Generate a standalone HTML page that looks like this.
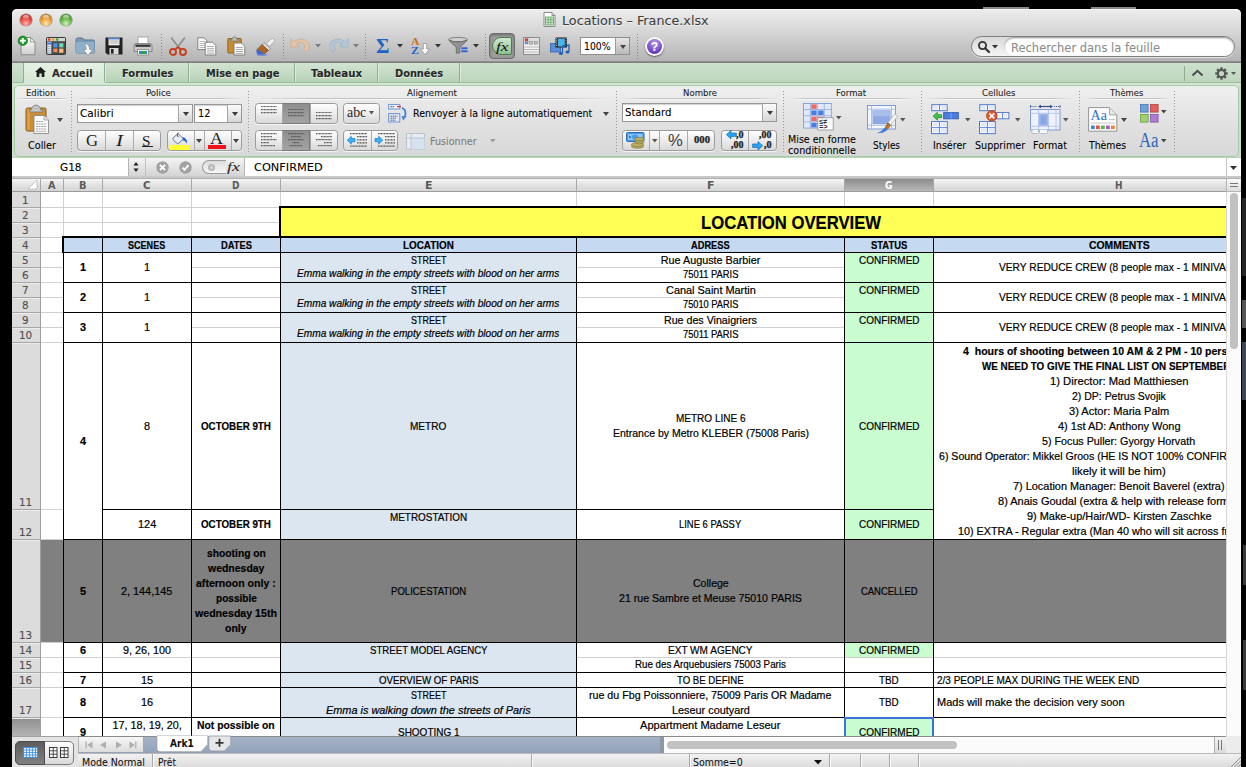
<!DOCTYPE html>
<html lang="fr"><head><meta charset="utf-8"><title>Locations – France.xlsx</title>
<style>
html,body{margin:0;padding:0;background:#000;}
body{width:1246px;height:767px;overflow:hidden;position:relative;font-family:"Liberation Sans",sans-serif;}
#root{position:absolute;left:0;top:0;width:1246px;height:767px;overflow:hidden;background:#000;}
#root div{position:absolute;box-sizing:border-box;}
#root svg{position:absolute;overflow:visible;}
.t{position:absolute;white-space:pre;line-height:16px;transform-origin:0 50%;-webkit-text-stroke:0.2px currentColor;}

</style></head>
<body>
<div id="root">
<div style="left:983px;top:7px;width:46px;height:2px;background:#8a8a8a;"></div>
<div style="left:1091px;top:7px;width:45px;height:2px;background:#8a8a8a;"></div>
<div style="left:12px;top:9px;width:1229px;height:758px;background:#c9dfc9;border-radius:5px 5px 0 0;"></div>
<div style="left:12px;top:9px;width:1229px;height:53px;background:linear-gradient(#ececec,#d6d6d6 42%,#b3b3b3);border-radius:5px 5px 0 0;border-top:1px solid #f6f6f6;"></div>
<div style="left:12px;top:61px;width:1229px;height:1px;background:#8e8e8e;"></div>
<div style="left:12px;top:62px;width:1229px;height:1px;background:#7f7f7f;"></div>
<div style="left:20px;top:14px;width:12px;height:12px;border-radius:50%;background:radial-gradient(circle at 50% 78%,#ffb3ab 0,#e9524a 45%,#b3261f 82%,#7d1510 100%);box-shadow:0 0 0 0.6px rgba(0,0,0,.4),0 1px 0.5px rgba(255,255,255,.7);"></div>
<div style="left:23px;top:15px;width:6px;height:3.5px;border-radius:50%;background:linear-gradient(rgba(255,255,255,.75),rgba(255,255,255,.05));"></div>
<div style="left:40px;top:14px;width:12px;height:12px;border-radius:50%;background:radial-gradient(circle at 50% 78%,#ffe9a8 0,#eda23c 45%,#b8741c 82%,#80500f 100%);box-shadow:0 0 0 0.6px rgba(0,0,0,.4),0 1px 0.5px rgba(255,255,255,.7);"></div>
<div style="left:43px;top:15px;width:6px;height:3.5px;border-radius:50%;background:linear-gradient(rgba(255,255,255,.75),rgba(255,255,255,.05));"></div>
<div style="left:60px;top:14px;width:12px;height:12px;border-radius:50%;background:radial-gradient(circle at 50% 78%,#d3f0bc 0,#69b84a 45%,#3f8a28 82%,#275e16 100%);box-shadow:0 0 0 0.6px rgba(0,0,0,.4),0 1px 0.5px rgba(255,255,255,.7);"></div>
<div style="left:63px;top:15px;width:6px;height:3.5px;border-radius:50%;background:linear-gradient(rgba(255,255,255,.75),rgba(255,255,255,.05));"></div>
<svg style="left:543px;top:12px" width="13" height="15" viewBox="0 0 13 15"><path d="M1 .5H9L12 3.5V14.5H1Z" fill="#fff" stroke="#8a8a8a"/><path d="M9 .5V3.5H12" fill="#ddd" stroke="#8a8a8a"/><rect x="2.5" y="5" width="8" height="8" fill="#d5ead5" stroke="#5aa25a" stroke-width=".8"/><path d="M2.5 7.7H10.5M2.5 10.3H10.5M5.2 5V13M7.8 5V13" stroke="#5aa25a" stroke-width=".7"/></svg>
<span class="t" style="left:561.90px;top:13px;font-size:12.6px;font-family:'DejaVu Sans',sans-serif;color:#3c3c3c;transform:scaleX(1.0111);-webkit-text-stroke:0.08px currentColor;text-shadow:0 1px 0 rgba(255,255,255,.6);">Locations – France.xlsx</span>
<svg style="left:18px;top:36px" width="18" height="20" viewBox="0 0 18 20"><defs><linearGradient id="gd" x1="0" y1="0" x2="0" y2="1"><stop offset="0" stop-color="#ffffff"/><stop offset="1" stop-color="#cfcfcf"/></linearGradient></defs><path d="M3 1.500H12.500L17 6V18.800H3Z" fill="url(#gd)" stroke="#8a8a8a"/><path d="M12.500 1.500V6H17Z" fill="#eee" stroke="#8a8a8a" stroke-width=".8"/><circle cx="4.800" cy="4.800" r="4.700" fill="#1f9a2c" stroke="#156e1e" stroke-width=".7"/><path d="M4.800 1.900V7.700M1.900 4.800H7.700" stroke="#fff" stroke-width="1.900"/></svg>
<svg style="left:46px;top:37px" width="20" height="18" viewBox="0 0 20 18"><rect x=".5" y=".5" width="19" height="17" rx="1" fill="#4a4a4a" stroke="#3a3a3a"/><rect x="1" y="1" width="18" height="3.200" fill="#d4d4d4"/><circle cx="3.200" cy="2.600" r="1.300" fill="#e0342a"/><circle cx="7.200" cy="2.600" r="1.300" fill="#f09a1c"/><circle cx="11.200" cy="2.600" r="1.300" fill="#2fae2a"/><rect x="1.300" y="4.800" width="4" height="12" fill="#dfe6f2"/><rect x="1.300" y="5.500" width="4" height="2" fill="#3a78d8"/><path d="M2 9.500H4.600M2 11.500H4.600M2 13.500H4.600M2 15.500H4.600" stroke="#9ab" stroke-width=".8"/><rect x="7.300" y="6.200" width="4.200" height="4.200" fill="#4a95ea"/><rect x="13.200" y="6.200" width="4.200" height="4.200" fill="#6adcb8"/><rect x="7.300" y="11.600" width="4.200" height="3.600" fill="#f48a5a"/><rect x="13.200" y="11.600" width="4.200" height="4.200" fill="#f6c07a"/></svg>
<svg style="left:75px;top:37px" width="21" height="19" viewBox="0 0 21 19"><path d="M1 2.500Q1 1 2.500 1H7.500L9.500 3H18Q19.500 3 19.500 4.500V14.500Q19.500 16 18 16H2.500Q1 16 1 14.500Z" fill="#7b9ab6" stroke="#56748e"/><path d="M1 5H19.500V14.500Q19.500 16 18 16H2.500Q1 16 1 14.500Z" fill="#8fb0cb"/><path d="M9.200 6.500Q14.500 6.800 14.600 12.500H17.600L13 18.500L8.400 12.500H11.400Q11.400 9 9.200 6.500Z" fill="#fff" stroke="#8a8a8a" stroke-width=".7"/></svg>
<svg style="left:105px;top:37px" width="18" height="18" viewBox="0 0 18 18"><path d="M.5 .5H17.5V17.5H2.5L.5 15.5Z" fill="#222"/><rect x="3.5" y=".8" width="11" height="7.5" fill="#f2f2f2"/><rect x="3.5" y=".8" width="11" height="1.6" fill="#4a7fd0"/><path d="M4.5 4H13.5M4.5 6H13.5" stroke="#999" stroke-width=".8"/><rect x="4.5" y="11" width="9" height="6.5" fill="#d8d8d8"/><rect x="6" y="12" width="2.6" height="4.6" fill="#222"/></svg>
<svg style="left:133px;top:36px" width="20" height="20" viewBox="0 0 20 20"><rect x="5" y="1" width="10" height="7" fill="#fff" stroke="#999" stroke-width=".8"/><path d="M1 9.5Q1 7.5 3 7.5H17Q19 7.5 19 9.5V15.5H1Z" fill="#c9c9c9" stroke="#777" stroke-width=".8"/><rect x="2.5" y="8.6" width="15" height="2.2" fill="#333"/><rect x="4.5" y="13.5" width="11" height="5.5" fill="#f4f4f4" stroke="#888" stroke-width=".8"/><rect x="6" y="15" width="8" height="3" fill="#2b8ad0"/><rect x="9" y="15" width="3" height="3" fill="#2fa25a"/></svg>
<svg style="left:169px;top:36.5px" width="18" height="19" viewBox="0 0 18 19"><path d="M2.5 1L10.5 11.5M15.5 1L7.5 11.5" stroke="#8d8d8d" stroke-width="1.6" stroke-linecap="round"/><circle cx="4" cy="15" r="3" fill="none" stroke="#c5401f" stroke-width="1.9"/><circle cx="14" cy="15" r="3" fill="none" stroke="#c5401f" stroke-width="1.9"/><path d="M6 12.6L9 10M12 12.6L9 10" stroke="#c5401f" stroke-width="1.8"/></svg>
<svg style="left:196.5px;top:36.5px" width="20" height="19" viewBox="0 0 20 19"><path d="M.8 .8H7L9.8 3.6V12.6H.8Z" fill="#fbfbfb" stroke="#777" stroke-width=".9"/><path d="M2.5 4.5H8M2.5 6.5H8M2.5 8.5H8M2.5 10.5H8" stroke="#aaa" stroke-width=".8"/><path d="M8.2 5.2H15.5L18.8 8.5V18H8.2Z" fill="#fbfbfb" stroke="#777" stroke-width=".9"/><path d="M10 9.500H17M10 11.700H17M10 13.900H17M10 16.100H17" stroke="#8a8a8a" stroke-width=".7"/></svg>
<svg style="left:227px;top:36px" width="19" height="20" viewBox="0 0 19 20"><rect x=".8" y="2.5" width="13.5" height="14.5" rx="1" fill="#c98a2d" stroke="#8f5d14" stroke-width=".9"/><path d="M5 3.5Q5 1 7.5 .8Q10 1 10 3.5H11.5V5H3.5V3.5Z" fill="#b9b9b9" stroke="#777" stroke-width=".7"/><path d="M7 7H14.5L17.8 10.3V19H7Z" fill="#fbfbfb" stroke="#777" stroke-width=".9"/><path d="M8.8 11.5H16M8.8 13.5H16M8.8 15.5H16M8.8 17.3H16" stroke="#999" stroke-width=".8"/></svg>
<svg style="left:255px;top:36.5px" width="21" height="19" viewBox="0 0 21 19"><path d="M11.5 6.5L16 2Q17.5 .5 19 2Q20.2 3.5 18.7 5L14.2 9.5Z" fill="#f1f1f1" stroke="#999" stroke-width=".7"/><path d="M9 5.5L15.5 11.5L13.5 13.5L7 7.5Z" fill="#dcdcdc" stroke="#888" stroke-width=".7"/><path d="M7 7.5L13.5 13.5L9 17L2 12.5Z" fill="#a8682a" stroke="#7a4613" stroke-width=".6"/><path d="M1.5 12.5Q6 13.5 9 17Q5.5 18.5 3 17.5Q1 16.5 1.5 12.5Z" fill="#3f66d8"/><ellipse cx="7" cy="17.8" rx="5.5" ry="1.1" fill="#5a78dc" opacity=".7"/></svg>
<svg style="left:290px;top:38px" width="21" height="15" viewBox="0 0 21 15"><path d="M.5 1L1 9.5L9.5 8.5L6.5 6.2Q10 3.5 13.5 5.2Q16.5 7.5 13.8 11.3L16.2 13.8Q21.5 8.5 17.5 3.5Q12 -1.5 3.8 3.6Z" fill="#e3c3a5" stroke="#c9a888" stroke-width=".6"/></svg>
<svg style="left:314.5px;top:44.25px" width="6" height="3.5" viewBox="0 0 6 3.5"><path d="M0 0H6L3.0 3.5Z" fill="#7d7d7d"/></svg>
<svg style="left:328px;top:38px" width="21" height="15" viewBox="0 0 21 15"><path d="M20.5 1L20 9.5L11.5 8.5L14.5 6.2Q11 3.5 7.5 5.2Q4.5 7.5 7.2 11.3L4.8 13.8Q-.5 8.5 3.5 3.5Q9 -1.5 17.2 3.6Z" fill="#b4c7d8" stroke="#97adc2" stroke-width=".6"/></svg>
<svg style="left:352.5px;top:44.25px" width="6" height="3.5" viewBox="0 0 6 3.5"><path d="M0 0H6L3.0 3.5Z" fill="#7d7d7d"/></svg>
<span class="t" style="left:375.50px;top:38px;font-size:20px;font-family:'Liberation Serif',serif;font-weight:bold;color:#1f63c4;transform:scaleX(1.0323);-webkit-text-stroke:0;">Σ</span>
<svg style="left:396.5px;top:44.25px" width="6" height="3.5" viewBox="0 0 6 3.5"><path d="M0 0H6L3.0 3.5Z" fill="#333"/></svg>
<span class="t" style="left:410.50px;top:34px;font-size:10.5px;font-family:'Liberation Serif',serif;font-weight:bold;color:#c8701c;transform:scaleX(1.1193);-webkit-text-stroke:0;">A</span>
<span class="t" style="left:410.50px;top:43px;font-size:10.5px;font-family:'Liberation Serif',serif;font-weight:bold;color:#2a62c8;transform:scaleX(1.1403);-webkit-text-stroke:0;">Z</span>
<svg style="left:420px;top:42.5px" width="10" height="12" viewBox="0 0 10 12"><path d="M3.3 .5H6.7V6H9.5L5 11.5L.5 6H3.3Z" fill="#fff" stroke="#8a8a8a" stroke-width=".7"/></svg>
<svg style="left:434.5px;top:44.25px" width="6" height="3.5" viewBox="0 0 6 3.5"><path d="M0 0H6L3.0 3.5Z" fill="#333"/></svg>
<svg style="left:448px;top:37px" width="21" height="17" viewBox="0 0 21 17"><ellipse cx="10" cy="2.6" rx="9.3" ry="2.2" fill="#d0d0d0" stroke="#6c6c6c" stroke-width=".8"/><path d="M.8 3.2L8.3 10.5V16H11.7V10.5L19.2 3.2Q10 6.6 .8 3.2Z" fill="#939393" stroke="#5e5e5e" stroke-width=".8"/><rect x="13.3" y="10.3" width="6.2" height="1.9" fill="#2a62d8"/><rect x="13.3" y="13.3" width="6.2" height="1.9" fill="#2a62d8"/></svg>
<svg style="left:472.5px;top:44.25px" width="6" height="3.5" viewBox="0 0 6 3.5"><path d="M0 0H6L3.0 3.5Z" fill="#333"/></svg>
<div style="left:489px;top:33px;width:26px;height:26px;border-radius:4px;background:#9d9d9d;border:1px solid #6f6f6f;box-shadow:inset 0 1px 3px rgba(0,0,0,.35);"></div>
<div style="left:492px;top:37px;width:20px;height:18px;border-radius:9px 2px 2px 9px;background:linear-gradient(#cfe8cf,#8fc08f);border:1px solid #4f7a4f;"></div>
<span class="t" style="left:496.20px;top:39px;font-size:13.5px;font-family:'Liberation Serif',serif;font-style:italic;color:#111;transform:scaleX(1.2821);-webkit-text-stroke:0;">fx</span>
<svg style="left:523px;top:37px" width="17" height="18" viewBox="0 0 17 18"><rect x=".6" y=".6" width="15.8" height="16.8" fill="#f4f4f4" stroke="#7e7e7e" stroke-width=".9"/><rect x="1.2" y="1.2" width="14.6" height="6.2" fill="#dedede"/><rect x="1.8" y="1.4" width="3.4" height="3" fill="#d8402a"/><rect x="1.8" y="4.6" width="3.4" height="2.6" fill="#6a8fd0"/><rect x="6.6" y="4.4" width="3.2" height="2.8" fill="#bdbdbd" stroke="#888" stroke-width=".5"/><rect x="11.4" y="4.4" width="3.2" height="2.8" fill="#bdbdbd" stroke="#888" stroke-width=".5"/><path d="M1.2 10H15.8M1.2 12.5H15.8M1.2 15H15.8" stroke="#b5b5b5" stroke-width="1"/></svg>
<svg style="left:550px;top:36.5px" width="21" height="19" viewBox="0 0 21 19"><rect x=".6" y="6.500" width="10" height="8.500" fill="#5a8fd8" stroke="#2f5fa8" stroke-width=".8"/><rect x="5.500" y=".5" width="11.500" height="10" fill="#1c1c1c"/><rect x="7.800" y="1.500" width="7" height="8" fill="#4ab4e8"/><path d="M6.600 1.200V10M16 1.200V10" stroke="#fff" stroke-width=".9" stroke-dasharray="1 1.200"/><path d="M12.500 9V16.200M12.500 9L19 8V14.800" stroke="#1f5fb0" stroke-width="1.300" fill="none"/><ellipse cx="10.900" cy="16.400" rx="2" ry="1.500" fill="#1f5fb0"/><ellipse cx="17.400" cy="15" rx="2" ry="1.500" fill="#1f5fb0"/></svg>
<div style="left:644.5px;top:36.5px;width:19px;height:19px;border-radius:50%;background:#fbfbfb;box-shadow:0 1px 1.5px rgba(0,0,0,.5);"></div>
<div style="left:646.5px;top:38.5px;width:15px;height:15px;border-radius:50%;background:radial-gradient(circle at 50% 25%,#b59be6,#6c3fc2 70%,#5a30ad);"></div>
<span class="t" style="left:650.60px;top:39px;font-size:12.5px;font-weight:bold;color:#fff;transform:scaleX(0.9162);">?</span>
<div style="left:580px;top:37px;width:50px;height:18px;background:#fff;border:1px solid #8f8f8f;"></div>
<div style="left:615px;top:38px;width:14px;height:16px;background:linear-gradient(#e6e6e6,#b9b9b9);border-left:1px solid #9c9c9c;"></div>
<svg style="left:619.5px;top:44.5px" width="6" height="4" viewBox="0 0 6 4"><path d="M0 0H6L3.0 4Z" fill="#444"/></svg>
<span class="t" style="left:583.50px;top:38px;font-size:10.6px;font-family:'DejaVu Sans',sans-serif;transform:scaleX(0.8747);-webkit-text-stroke:0.08px currentColor;">100%</span>
<div style="left:161px;top:34px;width:1px;height:26px;background:repeating-linear-gradient(#8a8a8a 0 1px,transparent 1px 3px);"></div>
<div style="left:283px;top:34px;width:1px;height:26px;background:repeating-linear-gradient(#8a8a8a 0 1px,transparent 1px 3px);"></div>
<div style="left:365px;top:34px;width:1px;height:26px;background:repeating-linear-gradient(#8a8a8a 0 1px,transparent 1px 3px);"></div>
<div style="left:485px;top:34px;width:1px;height:26px;background:repeating-linear-gradient(#8a8a8a 0 1px,transparent 1px 3px);"></div>
<div style="left:637px;top:34px;width:1px;height:26px;background:repeating-linear-gradient(#8a8a8a 0 1px,transparent 1px 3px);"></div>
<div style="left:971px;top:36px;width:264px;height:21px;border-radius:10.5px;background:linear-gradient(#d9d9d9,#f4f4f4);border:1px solid #7e7e7e;box-shadow:0 1px 0 rgba(255,255,255,.6);"></div>
<div style="left:1004px;top:37px;width:230px;height:19px;border-radius:9.5px;background:#fff;box-shadow:inset 0 1px 2px rgba(0,0,0,.45);"></div>
<svg style="left:977px;top:40px" width="14" height="14" viewBox="0 0 14 14"><circle cx="5.5" cy="5.5" r="3.6" fill="none" stroke="#333" stroke-width="1.8"/><path d="M8.2 8.2L12 12" stroke="#333" stroke-width="2.2" stroke-linecap="round"/></svg>
<svg style="left:991.5px;top:45.25px" width="6" height="3.5" viewBox="0 0 6 3.5"><path d="M0 0H6L3.0 3.5Z" fill="#333"/></svg>
<span class="t" style="left:1011.00px;top:40px;font-size:12px;font-family:'DejaVu Sans',sans-serif;color:#8c8c8c;transform:scaleX(0.9581);-webkit-text-stroke:0.08px currentColor;">Rechercher dans la feuille</span>
<div style="left:12px;top:63px;width:1229px;height:20px;background:linear-gradient(#cde0cd,#bcd5bc);"></div>
<div style="left:12px;top:82px;width:1229px;height:1px;background:#9cbd9c;"></div>
<div style="left:12px;top:83px;width:1229px;height:3px;background:#d3e6d3;"></div>
<div style="left:24px;top:63px;width:81px;height:21px;background:linear-gradient(#e6f1e6,#d3e6d3);"></div>
<div style="left:104px;top:63px;width:1px;height:19px;background:#8fb08f;"></div>
<div style="left:105px;top:63px;width:1px;height:19px;background:#dcebdc;"></div>
<span class="t" style="left:52.00px;top:66px;font-size:11.2px;font-family:'DejaVu Sans',sans-serif;font-weight:bold;color:#262626;transform:scaleX(0.8991);-webkit-text-stroke:0.08px currentColor;text-shadow:0 1px 0 rgba(255,255,255,.55);">Accueil</span>
<div style="left:106px;top:63px;width:83px;height:19px;background:linear-gradient(#d2e3d2,#b7d2b7);"></div>
<div style="left:188px;top:63px;width:1px;height:19px;background:#8fb08f;"></div>
<div style="left:189px;top:63px;width:1px;height:19px;background:#dcebdc;"></div>
<span class="t" style="left:121.50px;top:66px;font-size:11.2px;font-family:'DejaVu Sans',sans-serif;font-weight:bold;color:#262626;transform:scaleX(0.8828);-webkit-text-stroke:0.08px currentColor;text-shadow:0 1px 0 rgba(255,255,255,.55);">Formules</span>
<div style="left:190px;top:63px;width:105px;height:19px;background:linear-gradient(#d2e3d2,#b7d2b7);"></div>
<div style="left:294px;top:63px;width:1px;height:19px;background:#8fb08f;"></div>
<div style="left:295px;top:63px;width:1px;height:19px;background:#dcebdc;"></div>
<span class="t" style="left:205.50px;top:66px;font-size:11.2px;font-family:'DejaVu Sans',sans-serif;font-weight:bold;color:#262626;transform:scaleX(0.8779);-webkit-text-stroke:0.08px currentColor;text-shadow:0 1px 0 rgba(255,255,255,.55);">Mise en page</span>
<div style="left:296px;top:63px;width:82px;height:19px;background:linear-gradient(#d2e3d2,#b7d2b7);"></div>
<div style="left:377px;top:63px;width:1px;height:19px;background:#8fb08f;"></div>
<div style="left:378px;top:63px;width:1px;height:19px;background:#dcebdc;"></div>
<span class="t" style="left:311.00px;top:66px;font-size:11.2px;font-family:'DejaVu Sans',sans-serif;font-weight:bold;color:#262626;transform:scaleX(0.9122);-webkit-text-stroke:0.08px currentColor;text-shadow:0 1px 0 rgba(255,255,255,.55);">Tableaux</span>
<div style="left:379px;top:63px;width:81px;height:19px;background:linear-gradient(#d2e3d2,#b7d2b7);"></div>
<div style="left:459px;top:63px;width:1px;height:19px;background:#8fb08f;"></div>
<div style="left:460px;top:63px;width:1px;height:19px;background:#dcebdc;"></div>
<span class="t" style="left:395.00px;top:66px;font-size:11.2px;font-family:'DejaVu Sans',sans-serif;font-weight:bold;color:#262626;transform:scaleX(0.8767);-webkit-text-stroke:0.08px currentColor;text-shadow:0 1px 0 rgba(255,255,255,.55);">Données</span>
<div style="left:23px;top:63px;width:1px;height:19px;background:#8fb08f;"></div>
<svg style="left:35px;top:66.5px" width="11" height="10" viewBox="0 0 11 10"><path d="M5.5 0L0 5H1.6V10H4.3V6.5H6.7V10H9.4V5H11Z" fill="#1e1e1e"/></svg>
<div style="left:1184px;top:66px;width:1px;height:15px;background:#8fae8f;"></div>
<svg style="left:1191px;top:69px" width="13" height="8" viewBox="0 0 13 8"><path d="M1.5 6.5L6.5 1.8L11.5 6.5" fill="none" stroke="#4c4c4c" stroke-width="2"/></svg>
<svg style="left:1214.5px;top:66.5px" width="13" height="13" viewBox="0 0 13 13"><g transform="translate(6.5 6.5)"><rect x="-1.2" y="-6.2" width="2.4" height="3.2" fill="#555" transform="rotate(0)"/><rect x="-1.2" y="-6.2" width="2.4" height="3.2" fill="#555" transform="rotate(45)"/><rect x="-1.2" y="-6.2" width="2.4" height="3.2" fill="#555" transform="rotate(90)"/><rect x="-1.2" y="-6.2" width="2.4" height="3.2" fill="#555" transform="rotate(135)"/><rect x="-1.2" y="-6.2" width="2.4" height="3.2" fill="#555" transform="rotate(180)"/><rect x="-1.2" y="-6.2" width="2.4" height="3.2" fill="#555" transform="rotate(225)"/><rect x="-1.2" y="-6.2" width="2.4" height="3.2" fill="#555" transform="rotate(270)"/><rect x="-1.2" y="-6.2" width="2.4" height="3.2" fill="#555" transform="rotate(315)"/><circle r="3.6" fill="none" stroke="#555" stroke-width="2"/></g></svg>
<svg style="left:1230.5px;top:71.5px" width="5" height="3" viewBox="0 0 5 3"><path d="M0 0H5L2.5 3Z" fill="#555"/></svg>
<div style="left:14px;top:85px;width:1225px;height:72px;background:linear-gradient(#efefef,#e2e2e2 50%,#d8d8d8);border:1px solid #a5cca5;border-radius:5px;"></div>
<div style="left:12px;top:157px;width:1229px;height:1px;background:#b9d4b9;"></div>
<span class="t" style="left:26.40px;top:85px;font-size:8.8px;font-family:'DejaVu Sans',sans-serif;color:#1a1a1a;transform:scaleX(0.9659);-webkit-text-stroke:0.08px currentColor;">Edition</span>
<div style="left:17px;top:98px;width:51px;height:1px;background:linear-gradient(90deg,rgba(190,190,190,0),#c2c2c2 15%,#c2c2c2 85%,rgba(190,190,190,0));"></div>
<div style="left:17px;top:99px;width:51px;height:1px;background:linear-gradient(90deg,rgba(255,255,255,0),#f8f8f8 15%,#f8f8f8 85%,rgba(255,255,255,0));"></div>
<span class="t" style="left:146.20px;top:85px;font-size:8.8px;font-family:'DejaVu Sans',sans-serif;color:#1a1a1a;transform:scaleX(0.9759);-webkit-text-stroke:0.08px currentColor;">Police</span>
<div style="left:76px;top:98px;width:167px;height:1px;background:linear-gradient(90deg,rgba(190,190,190,0),#c2c2c2 15%,#c2c2c2 85%,rgba(190,190,190,0));"></div>
<div style="left:76px;top:99px;width:167px;height:1px;background:linear-gradient(90deg,rgba(255,255,255,0),#f8f8f8 15%,#f8f8f8 85%,rgba(255,255,255,0));"></div>
<span class="t" style="left:407.00px;top:85px;font-size:8.8px;font-family:'DejaVu Sans',sans-serif;color:#1a1a1a;transform:scaleX(0.9904);-webkit-text-stroke:0.08px currentColor;">Alignement</span>
<div style="left:253px;top:98px;width:358px;height:1px;background:linear-gradient(90deg,rgba(190,190,190,0),#c2c2c2 15%,#c2c2c2 85%,rgba(190,190,190,0));"></div>
<div style="left:253px;top:99px;width:358px;height:1px;background:linear-gradient(90deg,rgba(255,255,255,0),#f8f8f8 15%,#f8f8f8 85%,rgba(255,255,255,0));"></div>
<span class="t" style="left:682.70px;top:85px;font-size:8.8px;font-family:'DejaVu Sans',sans-serif;color:#1a1a1a;transform:scaleX(0.9727);-webkit-text-stroke:0.08px currentColor;">Nombre</span>
<div style="left:621px;top:98px;width:157px;height:1px;background:linear-gradient(90deg,rgba(190,190,190,0),#c2c2c2 15%,#c2c2c2 85%,rgba(190,190,190,0));"></div>
<div style="left:621px;top:99px;width:157px;height:1px;background:linear-gradient(90deg,rgba(255,255,255,0),#f8f8f8 15%,#f8f8f8 85%,rgba(255,255,255,0));"></div>
<span class="t" style="left:836.00px;top:85px;font-size:8.8px;font-family:'DejaVu Sans',sans-serif;color:#1a1a1a;transform:scaleX(0.9677);-webkit-text-stroke:0.08px currentColor;">Format</span>
<div style="left:788px;top:98px;width:128px;height:1px;background:linear-gradient(90deg,rgba(190,190,190,0),#c2c2c2 15%,#c2c2c2 85%,rgba(190,190,190,0));"></div>
<div style="left:788px;top:99px;width:128px;height:1px;background:linear-gradient(90deg,rgba(255,255,255,0),#f8f8f8 15%,#f8f8f8 85%,rgba(255,255,255,0));"></div>
<span class="t" style="left:982.00px;top:85px;font-size:8.8px;font-family:'DejaVu Sans',sans-serif;color:#1a1a1a;transform:scaleX(0.9748);-webkit-text-stroke:0.08px currentColor;">Cellules</span>
<div style="left:926px;top:98px;width:148px;height:1px;background:linear-gradient(90deg,rgba(190,190,190,0),#c2c2c2 15%,#c2c2c2 85%,rgba(190,190,190,0));"></div>
<div style="left:926px;top:99px;width:148px;height:1px;background:linear-gradient(90deg,rgba(255,255,255,0),#f8f8f8 15%,#f8f8f8 85%,rgba(255,255,255,0));"></div>
<span class="t" style="left:1110.20px;top:85px;font-size:8.8px;font-family:'DejaVu Sans',sans-serif;color:#1a1a1a;transform:scaleX(0.9531);-webkit-text-stroke:0.08px currentColor;">Thèmes</span>
<div style="left:1084px;top:98px;width:86px;height:1px;background:linear-gradient(90deg,rgba(190,190,190,0),#c2c2c2 15%,#c2c2c2 85%,rgba(190,190,190,0));"></div>
<div style="left:1084px;top:99px;width:86px;height:1px;background:linear-gradient(90deg,rgba(255,255,255,0),#f8f8f8 15%,#f8f8f8 85%,rgba(255,255,255,0));"></div>
<div style="left:71px;top:91px;width:1px;height:62px;background:repeating-linear-gradient(#9a9a9a 0 1px,transparent 1px 3px);"></div>
<div style="left:248px;top:91px;width:1px;height:62px;background:repeating-linear-gradient(#9a9a9a 0 1px,transparent 1px 3px);"></div>
<div style="left:616px;top:91px;width:1px;height:62px;background:repeating-linear-gradient(#9a9a9a 0 1px,transparent 1px 3px);"></div>
<div style="left:783px;top:91px;width:1px;height:62px;background:repeating-linear-gradient(#9a9a9a 0 1px,transparent 1px 3px);"></div>
<div style="left:921px;top:91px;width:1px;height:62px;background:repeating-linear-gradient(#9a9a9a 0 1px,transparent 1px 3px);"></div>
<div style="left:1079px;top:91px;width:1px;height:62px;background:repeating-linear-gradient(#9a9a9a 0 1px,transparent 1px 3px);"></div>
<div style="left:1174px;top:91px;width:1px;height:62px;background:repeating-linear-gradient(#9a9a9a 0 1px,transparent 1px 3px);"></div>
<svg style="left:25px;top:104px" width="24" height="30" viewBox="0 0 24 30"><rect x="1" y="4" width="20" height="23" rx="1.5" fill="#c98d33" stroke="#8d5c17"/><rect x="2" y="5" width="3" height="21" fill="#dba552" opacity=".7"/><path d="M6.5 6Q6.5 1.5 11 1Q15.500 1.5 15.500 6H17.500V8H4.500V6Z" fill="#c4c4c4" stroke="#7c7c7c" stroke-width=".8"/><circle cx="11" cy="3.6" r="1.1" fill="#f4f4f4" stroke="#888" stroke-width=".5"/><path d="M9 11.500H19L23.500 16V29.500H9Z" fill="#fcfcfc" stroke="#8a8a8a" stroke-width=".9"/><path d="M19 11.500V16H23.500" fill="#e4e4e4" stroke="#8a8a8a" stroke-width=".7"/><path d="M11 17.500H18M11 20H21.500M11 22.500H21.500M11 25H21.500M11 27.300H21.500" stroke="#9a9a9a" stroke-width=".9" stroke-dasharray="2 .6"/></svg>
<svg style="left:56.5px;top:118.0px" width="6" height="4" viewBox="0 0 6 4"><path d="M0 0H6L3.0 4Z" fill="#4a4a4a"/></svg>
<span class="t" style="left:27.70px;top:137px;font-size:10.4px;font-family:'DejaVu Sans',sans-serif;transform:scaleX(0.9314);-webkit-text-stroke:0.08px currentColor;">Coller</span>
<div style="left:77px;top:103.5px;width:116px;height:19.0px;background:#fff;border:1px solid #979797;box-shadow:inset 0 1px 1px rgba(0,0,0,.18);"></div>
<div style="left:178px;top:104.5px;width:14px;height:17.0px;background:linear-gradient(#fbfbfb,#d6d6d6);border-left:1px solid #a5a5a5;"></div>
<svg style="left:182.5px;top:111.5px" width="6" height="4" viewBox="0 0 6 4"><path d="M0 0H6L3.0 4Z" fill="#3a3a3a"/></svg>
<span class="t" style="left:80.20px;top:105px;font-size:10.6px;font-family:'DejaVu Sans',sans-serif;transform:scaleX(0.9937);-webkit-text-stroke:0.08px currentColor;">Calibri</span>
<div style="left:194px;top:103.5px;width:48px;height:19.0px;background:#fff;border:1px solid #979797;box-shadow:inset 0 1px 1px rgba(0,0,0,.18);"></div>
<div style="left:227px;top:104.5px;width:14px;height:17.0px;background:linear-gradient(#fbfbfb,#d6d6d6);border-left:1px solid #a5a5a5;"></div>
<svg style="left:231.5px;top:111.5px" width="6" height="4" viewBox="0 0 6 4"><path d="M0 0H6L3.0 4Z" fill="#3a3a3a"/></svg>
<span class="t" style="left:197.80px;top:105px;font-size:10.6px;font-family:'DejaVu Sans',sans-serif;transform:scaleX(0.9196);-webkit-text-stroke:0.08px currentColor;">12</span>
<div style="left:77px;top:130px;width:83.5px;height:20.5px;background:linear-gradient(#fefefe,#ececec 50%,#d9d9d9);border:1px solid #9b9b9b;border-radius:3.5px;box-shadow:0 1px 0 rgba(255,255,255,.7);"></div>
<div style="left:105px;top:131px;width:1px;height:18.5px;background:#a9a9a9;"></div>
<div style="left:132.5px;top:131px;width:1px;height:18.5px;background:#a9a9a9;"></div>
<span class="t" style="left:85.80px;top:133px;font-size:17px;font-family:'Liberation Serif',serif;color:#222;transform:scaleX(0.9771);-webkit-text-stroke:0;">G</span>
<span class="t" style="left:115.50px;top:133px;font-size:17px;font-family:'Liberation Serif',serif;font-style:italic;color:#222;transform:scaleX(1.2342);-webkit-text-stroke:0;">I</span>
<span class="t" style="left:142.00px;top:133px;font-size:15px;font-family:'Liberation Serif',serif;color:#222;transform:scaleX(1.0187);-webkit-text-stroke:0;">S</span>
<div style="left:141.5px;top:146.3px;width:11px;height:1px;background:#222;"></div>
<div style="left:166.5px;top:130px;width:75.0px;height:20.5px;background:linear-gradient(#fefefe,#ececec 50%,#d9d9d9);border:1px solid #9b9b9b;border-radius:3.5px;box-shadow:0 1px 0 rgba(255,255,255,.7);"></div>
<div style="left:193.5px;top:131px;width:1px;height:18.5px;background:#a9a9a9;"></div>
<div style="left:203.5px;top:131px;width:1px;height:18.5px;background:#a9a9a9;"></div>
<div style="left:231.3px;top:131px;width:1px;height:18.5px;background:#a9a9a9;"></div>
<svg style="left:171.5px;top:131.5px" width="17" height="13" viewBox="0 0 17 13"><path d="M6 1.500L11.500 7L6.800 11.200Q5.500 12.200 4.300 11L1.300 7.800Q.4 6.600 1.400 5.600Z" fill="#e9eef5" stroke="#5a6a80" stroke-width=".9"/><path d="M6.500 .6Q4 2.500 6.300 5.200" fill="none" stroke="#444" stroke-width=".9"/><path d="M10.500 5Q15.500 6 15 11.500Q13 8.500 10.800 8.200Z" fill="#2a66d8"/></svg>
<div style="left:169px;top:145px;width:20px;height:4.5px;background:#ffff33;"></div>
<svg style="left:195.5px;top:138.5px" width="6" height="4" viewBox="0 0 6 4"><path d="M0 0H6L3.0 4Z" fill="#444"/></svg>
<span class="t" style="left:210.30px;top:130px;font-size:17.5px;font-family:'Liberation Serif',serif;color:#222;transform:scaleX(1.0284);-webkit-text-stroke:0;">A</span>
<div style="left:208px;top:145px;width:18px;height:4px;background:#f2121c;"></div>
<svg style="left:233.4px;top:138.5px" width="6" height="4" viewBox="0 0 6 4"><path d="M0 0H6L3.0 4Z" fill="#444"/></svg>
<div style="left:254.5px;top:102.5px;width:83.0px;height:21.0px;background:linear-gradient(#fefefe,#ececec 50%,#d9d9d9);border:1px solid #9b9b9b;border-radius:3.5px;box-shadow:0 1px 0 rgba(255,255,255,.7);"></div>
<div style="left:282px;top:102.5px;width:27.5px;height:21.0px;background:linear-gradient(#8e8e8e,#a3a3a3);border:1px solid #7a7a7a;border-radius:0;"></div>
<div style="left:282px;top:103.5px;width:1px;height:19.0px;background:#a9a9a9;"></div>
<div style="left:309.5px;top:103.5px;width:1px;height:19.0px;background:#a9a9a9;"></div>
<svg style="left:260.5px;top:105.6px" width="16" height="9.149999999999999" viewBox="0 0 16 9.149999999999999"><path d="M0 0.5H16" stroke="#555" stroke-width="1.250" stroke-dasharray="1 .45"/><path d="M0 3.55H16" stroke="#555" stroke-width="1.250" stroke-dasharray="1 .45"/><path d="M0 6.6H16" stroke="#555" stroke-width="1.250" stroke-dasharray="1 .45"/></svg>
<svg style="left:288px;top:108.8px" width="16" height="9.149999999999999" viewBox="0 0 16 9.149999999999999"><path d="M0 0.5H16" stroke="#585858" stroke-width="1.250" stroke-dasharray="1 .45"/><path d="M0 3.55H16" stroke="#585858" stroke-width="1.250" stroke-dasharray="1 .45"/><path d="M0 6.6H16" stroke="#585858" stroke-width="1.250" stroke-dasharray="1 .45"/></svg>
<svg style="left:315.5px;top:112px" width="16" height="9.149999999999999" viewBox="0 0 16 9.149999999999999"><path d="M0 0.5H16" stroke="#555" stroke-width="1.250" stroke-dasharray="1 .45"/><path d="M0 3.55H16" stroke="#555" stroke-width="1.250" stroke-dasharray="1 .45"/><path d="M0 6.6H16" stroke="#555" stroke-width="1.250" stroke-dasharray="1 .45"/></svg>
<div style="left:254.5px;top:129.5px;width:83.0px;height:21.0px;background:linear-gradient(#fefefe,#ececec 50%,#d9d9d9);border:1px solid #9b9b9b;border-radius:3.5px;box-shadow:0 1px 0 rgba(255,255,255,.7);"></div>
<div style="left:282px;top:129.5px;width:27.5px;height:21.0px;background:linear-gradient(#8e8e8e,#a3a3a3);border:1px solid #7a7a7a;border-radius:0;"></div>
<div style="left:282px;top:130.5px;width:1px;height:19.0px;background:#a9a9a9;"></div>
<div style="left:309.5px;top:130.5px;width:1px;height:19.0px;background:#a9a9a9;"></div>
<svg style="left:260.5px;top:132.8px" width="16" height="15.25" viewBox="0 0 16 15.25"><path d="M0 0.5H16" stroke="#555" stroke-width="1.250" stroke-dasharray="1 .45"/><path d="M0 3.55H11" stroke="#555" stroke-width="1.250" stroke-dasharray="1 .45"/><path d="M0 6.6H16" stroke="#555" stroke-width="1.250" stroke-dasharray="1 .45"/><path d="M0 9.649999999999999H8" stroke="#555" stroke-width="1.250" stroke-dasharray="1 .45"/><path d="M0 12.7H14" stroke="#555" stroke-width="1.250" stroke-dasharray="1 .45"/></svg>
<svg style="left:288px;top:132.8px" width="16" height="15.25" viewBox="0 0 16 15.25"><path d="M0.0 0.5H16.0" stroke="#585858" stroke-width="1.250" stroke-dasharray="1 .45"/><path d="M3.0 3.55H13.0" stroke="#585858" stroke-width="1.250" stroke-dasharray="1 .45"/><path d="M0.0 6.6H16.0" stroke="#585858" stroke-width="1.250" stroke-dasharray="1 .45"/><path d="M4.5 9.649999999999999H11.5" stroke="#585858" stroke-width="1.250" stroke-dasharray="1 .45"/><path d="M1.5 12.7H14.5" stroke="#585858" stroke-width="1.250" stroke-dasharray="1 .45"/></svg>
<svg style="left:315.5px;top:132.8px" width="16" height="15.25" viewBox="0 0 16 15.25"><path d="M0 0.5H16" stroke="#555" stroke-width="1.250" stroke-dasharray="1 .45"/><path d="M5 3.55H16" stroke="#555" stroke-width="1.250" stroke-dasharray="1 .45"/><path d="M0 6.6H16" stroke="#555" stroke-width="1.250" stroke-dasharray="1 .45"/><path d="M8 9.649999999999999H16" stroke="#555" stroke-width="1.250" stroke-dasharray="1 .45"/><path d="M2 12.7H16" stroke="#555" stroke-width="1.250" stroke-dasharray="1 .45"/></svg>
<div style="left:343.3px;top:102.5px;width:37.099999999999966px;height:21.0px;background:linear-gradient(#fefefe,#ececec 50%,#d9d9d9);border:1px solid #9b9b9b;border-radius:3.5px;box-shadow:0 1px 0 rgba(255,255,255,.7);"></div>
<span class="t" style="left:346.80px;top:104px;font-size:14.2px;font-family:'Liberation Serif',serif;color:#2a2a2a;transform:scaleX(0.9795);-webkit-text-stroke:0;-webkit-text-stroke:0;">abc</span>
<svg style="left:369.2px;top:111.2px" width="5" height="3.6" viewBox="0 0 5 3.6"><path d="M0 0H5L2.5 3.6Z" fill="#555"/></svg>
<div style="left:343.3px;top:129.5px;width:55.099999999999966px;height:21.0px;background:linear-gradient(#fefefe,#ececec 50%,#d9d9d9);border:1px solid #9b9b9b;border-radius:3.5px;box-shadow:0 1px 0 rgba(255,255,255,.7);"></div>
<div style="left:370.5px;top:130.5px;width:1px;height:19.0px;background:#a9a9a9;"></div>
<svg style="left:350px;top:132.8px" width="17" height="14" viewBox="0 0 17 14"><path d="M0 0.6H17" stroke="#555" stroke-width="1.250" stroke-dasharray="1.100 .4"/><path d="M7 3.7H17" stroke="#555" stroke-width="1.250" stroke-dasharray="1.100 .4"/><path d="M7 6.8H17" stroke="#555" stroke-width="1.250" stroke-dasharray="1.100 .4"/><path d="M7 9.9H17" stroke="#555" stroke-width="1.250" stroke-dasharray="1.100 .4"/><path d="M0 13.0H17" stroke="#555" stroke-width="1.250" stroke-dasharray="1.100 .4"/></svg>
<svg style="left:346.8px;top:135.7px" width="8.5" height="8.5" viewBox="0 0 8.5 8.5"><path d="M4.300 .3L.3 4.200L4.300 8.100V5.800H8V2.600H4.300Z" fill="#3ab4f4" stroke="#1a78c8" stroke-width=".7"/></svg>
<svg style="left:378.1px;top:132.8px" width="17" height="14" viewBox="0 0 17 14"><path d="M0 0.6H17" stroke="#555" stroke-width="1.250" stroke-dasharray="1.100 .4"/><path d="M7 3.7H17" stroke="#555" stroke-width="1.250" stroke-dasharray="1.100 .4"/><path d="M7 6.8H17" stroke="#555" stroke-width="1.250" stroke-dasharray="1.100 .4"/><path d="M7 9.9H17" stroke="#555" stroke-width="1.250" stroke-dasharray="1.100 .4"/><path d="M0 13.0H17" stroke="#555" stroke-width="1.250" stroke-dasharray="1.100 .4"/></svg>
<svg style="left:374.9px;top:135.7px" width="8.5" height="8.5" viewBox="0 0 8.5 8.5"><path d="M3.700 .3L7.700 4.200L3.700 8.100V5.800H0V2.600H3.700Z" fill="#3ab4f4" stroke="#1a78c8" stroke-width=".7"/></svg>
<svg style="left:388px;top:103.8px" width="21" height="19" viewBox="0 0 21 19"><rect x=".6" y=".6" width="11.200" height="4.400" fill="#f2f6fc" stroke="#6b93d6" stroke-width="1"/><path d="M2.500 2.800H6.500" stroke="#445" stroke-width="1" stroke-dasharray="1.500 .6"/><path d="M9 2.600H13" stroke="#f02a2a" stroke-width="1.200"/><rect x=".6" y="9.600" width="11.200" height="8.400" fill="#dfe9f8" stroke="#6b93d6" stroke-width="1"/><path d="M2.500 12.200H9.500M2.500 14.200H8.500M2.500 16.200H7.500" stroke="#556" stroke-width=".9" stroke-dasharray="1.500 .5"/><path d="M14 3.800Q19.500 6.500 16.500 12.800" fill="none" stroke="#4a86d8" stroke-width="1.900"/><path d="M13.300 12.200L18.800 12L15.300 16.600Z" fill="#4a86d8"/></svg>
<span class="t" style="left:413.00px;top:105px;font-size:10.4px;font-family:'DejaVu Sans',sans-serif;transform:scaleX(0.9109);-webkit-text-stroke:0.08px currentColor;">Renvoyer à la ligne automatiquement</span>
<svg style="left:602.5px;top:111.5px" width="6" height="4" viewBox="0 0 6 4"><path d="M0 0H6L3.0 4Z" fill="#444"/></svg>
<svg style="left:406.2px;top:132.5px" width="19" height="17" viewBox="0 0 19 17"><rect x=".5" y=".5" width="18" height="15.600" fill="#e9edf2" stroke="#b9c4d2"/><rect x="5" y="5" width="13.500" height="11" fill="#d6e2ef"/><path d="M.5 5H18.500M5 .5V16" stroke="#b9c4d2"/></svg>
<span class="t" style="left:429.70px;top:133px;font-size:10.4px;font-family:'DejaVu Sans',sans-serif;color:#7b7b7b;transform:scaleX(0.9228);-webkit-text-stroke:0.08px currentColor;">Fusionner</span>
<svg style="left:490.25px;top:139.25px" width="5.5" height="3.5" viewBox="0 0 5.5 3.5"><path d="M0 0H5.5L2.75 3.5Z" fill="#9a9a9a"/></svg>
<div style="left:622px;top:103px;width:155px;height:18.799999999999997px;background:#fff;border:1px solid #979797;box-shadow:inset 0 1px 1px rgba(0,0,0,.18);"></div>
<div style="left:762.2px;top:104px;width:13.799999999999955px;height:16.799999999999997px;background:linear-gradient(#fbfbfb,#d6d6d6);border-left:1px solid #a5a5a5;"></div>
<svg style="left:766.6px;top:110.9px" width="6" height="4" viewBox="0 0 6 4"><path d="M0 0H6L3.0 4Z" fill="#3a3a3a"/></svg>
<span class="t" style="left:624.90px;top:104px;font-size:10.6px;font-family:'DejaVu Sans',sans-serif;transform:scaleX(0.9626);-webkit-text-stroke:0.08px currentColor;">Standard</span>
<div style="left:622px;top:130px;width:93px;height:21px;background:linear-gradient(#fefefe,#ececec 50%,#d9d9d9);border:1px solid #9b9b9b;border-radius:3.5px;box-shadow:0 1px 0 rgba(255,255,255,.7);"></div>
<div style="left:649px;top:131px;width:1px;height:19px;background:#a9a9a9;"></div>
<div style="left:659px;top:131px;width:1px;height:19px;background:#a9a9a9;"></div>
<div style="left:687px;top:131px;width:1px;height:19px;background:#a9a9a9;"></div>
<svg style="left:626px;top:132px" width="19" height="16.5" viewBox="0 0 19 16.5"><rect x=".5" y=".5" width="17.500" height="9" rx="1" fill="#4a9ae6" stroke="#2a6ac0"/><rect x="2" y="2" width="14.500" height="6" fill="#8cc4f4"/><ellipse cx="9" cy="5" rx="3" ry="2.400" fill="#4a9ae6"/><circle cx="4" cy="5" r="1" fill="#2a6ac0"/><g fill="#bdb06a" stroke="#7c7030" stroke-width=".6"><ellipse cx="11.500" cy="14.300" rx="6.200" ry="1.900"/><ellipse cx="11.500" cy="12.600" rx="6.200" ry="1.900"/><ellipse cx="13.300" cy="10.300" rx="4.600" ry="1.600"/><ellipse cx="13.300" cy="8.600" rx="4.600" ry="1.600"/><ellipse cx="13.300" cy="6.900" rx="4.600" ry="1.600"/></g></svg>
<svg style="left:651.75px;top:138.55px" width="5.5" height="3.5" viewBox="0 0 5.5 3.5"><path d="M0 0H5.5L2.75 3.5Z" fill="#555"/></svg>
<span class="t" style="left:667.60px;top:133px;font-size:17px;color:#3a3a3a;transform:scaleX(0.9785);-webkit-text-stroke:0;">%</span>
<span class="t" style="left:694.00px;top:132px;font-size:9.3px;font-family:'Liberation Serif',serif;font-weight:bold;color:#222;transform:scaleX(1.1467);-webkit-text-stroke:0;-webkit-text-stroke:0.25px #222;">000</span>
<div style="left:721px;top:130px;width:56px;height:21px;background:linear-gradient(#fefefe,#ececec 50%,#d9d9d9);border:1px solid #9b9b9b;border-radius:3.5px;box-shadow:0 1px 0 rgba(255,255,255,.7);"></div>
<div style="left:748px;top:131px;width:1px;height:19px;background:#a9a9a9;"></div>
<span class="t" style="left:736.00px;top:127px;font-size:9.3px;font-family:'Liberation Serif',serif;font-weight:bold;color:#1a1a1a;transform:scaleX(1.0881);-webkit-text-stroke:0;-webkit-text-stroke:0.25px #1a1a1a;">,0</span>
<span class="t" style="left:731.20px;top:137px;font-size:9.3px;font-family:'Liberation Serif',serif;font-weight:bold;color:#1a1a1a;transform:scaleX(1.0667);-webkit-text-stroke:0;-webkit-text-stroke:0.25px #1a1a1a;">,00</span>
<svg style="left:725.6px;top:130.2px" width="11" height="9.5" viewBox="0 0 11 9.5"><path d="M5 .4L.4 4.700L5 9V6.400H10.400V3H5Z" fill="#2aa4f0" stroke="#1668b8" stroke-width=".7"/></svg>
<span class="t" style="left:759.20px;top:127px;font-size:9.3px;font-family:'Liberation Serif',serif;font-weight:bold;color:#1a1a1a;transform:scaleX(1.0667);-webkit-text-stroke:0;-webkit-text-stroke:0.25px #1a1a1a;">,00</span>
<span class="t" style="left:764.00px;top:137px;font-size:9.3px;font-family:'Liberation Serif',serif;font-weight:bold;color:#1a1a1a;transform:scaleX(1.0881);-webkit-text-stroke:0;-webkit-text-stroke:0.25px #1a1a1a;">,0</span>
<svg style="left:752.4px;top:140.6px" width="11" height="9.5" viewBox="0 0 11 9.5"><path d="M6 .4L10.600 4.700L6 9V6.400H.6V3H6Z" fill="#2aa4f0" stroke="#1668b8" stroke-width=".7"/></svg>
<svg style="left:803px;top:103px" width="31" height="28" viewBox="0 0 31 28"><rect x=".4" y=".4" width="27.800" height="24.600" fill="#e8eefb" stroke="#6f93d4" stroke-width=".8"/><rect x="1.3" y="1.3" width="5.400" height="4.600" fill="#dfe8fa"/><rect x="8.25" y="1.3" width="5.400" height="4.600" fill="#f26a62"/><rect x="15.200000000000001" y="1.3" width="5.400" height="4.600" fill="#dfe8fa"/><rect x="22.150000000000002" y="1.3" width="5.400" height="4.600" fill="#dfe8fa"/><rect x="1.3" y="7.45" width="5.400" height="4.600" fill="#dfe8fa"/><rect x="8.25" y="7.45" width="5.400" height="4.600" fill="#4a7fe0"/><rect x="15.200000000000001" y="7.45" width="5.400" height="4.600" fill="#4a7fe0"/><rect x="22.150000000000002" y="7.45" width="5.400" height="4.600" fill="#dfe8fa"/><rect x="1.3" y="13.600000000000001" width="5.400" height="4.600" fill="#dfe8fa"/><rect x="8.25" y="13.600000000000001" width="5.400" height="4.600" fill="#f26a62"/><rect x="15.200000000000001" y="13.600000000000001" width="5.400" height="4.600" fill="#f26a62"/><rect x="22.150000000000002" y="13.600000000000001" width="5.400" height="4.600" fill="#dfe8fa"/><rect x="1.3" y="19.750000000000004" width="5.400" height="4.600" fill="#dfe8fa"/><rect x="8.25" y="19.750000000000004" width="5.400" height="4.600" fill="#4a7fe0"/><rect x="15.200000000000001" y="19.750000000000004" width="5.400" height="4.600" fill="#dfe8fa"/><rect x="22.150000000000002" y="19.750000000000004" width="5.400" height="4.600" fill="#dfe8fa"/><path d="M.4 6.550H28.200M.4 12.700H28.200M.4 18.850H28.200M7.350 .4V25M14.300 .4V25M21.250 .4V25" stroke="#7f9fd8" stroke-width=".7"/><rect x="14.800" y="14.800" width="15.400" height="12.200" fill="#fdfdfd" stroke="#8c8c8c" stroke-width=".8"/><text x="16.300" y="21" font-size="7" font-family="Liberation Sans,sans-serif" font-weight="bold" fill="#222">≤≠</text><text x="16.300" y="26" font-size="7" font-family="Liberation Sans,sans-serif" font-weight="bold" fill="#222">=&gt;</text></svg>
<svg style="left:835.95px;top:115.9px" width="5.5" height="3.6" viewBox="0 0 5.5 3.6"><path d="M0 0H5.5L2.75 3.6Z" fill="#555"/></svg>
<span class="t" style="left:788.30px;top:131px;font-size:10.4px;font-family:'DejaVu Sans',sans-serif;transform:scaleX(0.9178);-webkit-text-stroke:0.08px currentColor;">Mise en forme</span>
<span class="t" style="left:788.30px;top:142px;font-size:10.4px;font-family:'DejaVu Sans',sans-serif;transform:scaleX(0.9264);-webkit-text-stroke:0.08px currentColor;">conditionnelle</span>
<svg style="left:867px;top:105px" width="32" height="29" viewBox="0 0 32 29"><rect x=".5" y=".5" width="28" height="23.500" fill="#f3f6fd" stroke="#6f93d4" stroke-width=".9"/><path d="M.5 4.200H28.500M.5 20.300H28.500M4.500 .5V24M24.500 .5V24" stroke="#9db6e4" stroke-width=".8"/><rect x="5.500" y="5.200" width="18" height="14" fill="#8fa9e6"/><rect x="5.500" y="5.200" width="18" height="6" fill="#a9bdec"/><path d="M27.800 8.800L30.800 11.300L23.500 20L20.800 17.800Z" fill="#f4f4f4" stroke="#9a9a9a" stroke-width=".6"/><path d="M20.800 17.800L23.500 20Q21.500 25 14.500 27.500Q18.500 23 20.800 17.800Z" fill="#b8732a" stroke="#7a4613" stroke-width=".5"/><path d="M17.500 22.500Q19 25 21 24.500Q17 28 10 28.300Q15 26.500 17.500 22.500Z" fill="#3a7fe0"/></svg>
<svg style="left:899.65px;top:118.2px" width="5.5" height="3.6" viewBox="0 0 5.5 3.6"><path d="M0 0H5.5L2.75 3.6Z" fill="#555"/></svg>
<span class="t" style="left:873.30px;top:137px;font-size:10.4px;font-family:'DejaVu Sans',sans-serif;transform:scaleX(0.8567);-webkit-text-stroke:0.08px currentColor;">Styles</span>
<svg style="left:930.5px;top:103.5px" width="29" height="31" viewBox="0 0 29 31"><rect x="0.8" y="0.7" width="15.4" height="6" fill="#fff" stroke="#4f78c8" stroke-width="1"/><rect x="2.0" y="1.9" width="5.300000000000001" height="3.6" fill="#dfe8f6"/><rect x="9.7" y="1.9" width="5.300000000000001" height="3.6" fill="#dfe8f6"/><path d="M8.5 0.7V6.7" stroke="#4f78c8" stroke-width=".9"/><rect x="0.5" y="17.6" width="15.8" height="12" fill="#fff" stroke="#4f78c8" stroke-width="1"/><rect x="1.7" y="18.8" width="5.5" height="3.6" fill="#dfe8f6"/><rect x="9.6" y="18.8" width="5.5" height="3.6" fill="#dfe8f6"/><rect x="1.7" y="24.8" width="5.5" height="3.6" fill="#dfe8f6"/><rect x="9.6" y="24.8" width="5.5" height="3.6" fill="#dfe8f6"/><path d="M8.4 17.6V29.6" stroke="#4f78c8" stroke-width=".9"/><path d="M0.5 23.6H16.3" stroke="#4f78c8" stroke-width=".9"/><rect x="12.700" y="8.600" width="14.600" height="6.200" fill="#4a7ee0" stroke="#3a62b8"/><path d="M20 8.600V14.800" stroke="#86a8ee" stroke-width=".9"/><path d="M6.400 8.300L2 12.200L6.400 16.200V13.700H10.600V10.700H6.400Z" fill="#3fc24a" stroke="#1d8a2a" stroke-width=".7"/></svg>
<svg style="left:964.75px;top:118.0px" width="5.5" height="3.6" viewBox="0 0 5.5 3.6"><path d="M0 0H5.5L2.75 3.6Z" fill="#555"/></svg>
<svg style="left:978.5px;top:103.5px" width="31" height="31" viewBox="0 0 31 31"><rect x="0.8" y="0.7" width="15.4" height="6" fill="#fff" stroke="#4f78c8" stroke-width="1"/><rect x="2.0" y="1.9" width="5.300000000000001" height="3.6" fill="#dfe8f6"/><rect x="9.7" y="1.9" width="5.300000000000001" height="3.6" fill="#dfe8f6"/><path d="M8.5 0.7V6.7" stroke="#4f78c8" stroke-width=".9"/><rect x="0.5" y="17.6" width="15.8" height="12" fill="#fff" stroke="#4f78c8" stroke-width="1"/><rect x="1.7" y="18.8" width="5.5" height="3.6" fill="#dfe8f6"/><rect x="9.6" y="18.8" width="5.5" height="3.6" fill="#dfe8f6"/><rect x="1.7" y="24.8" width="5.5" height="3.6" fill="#dfe8f6"/><rect x="9.6" y="24.8" width="5.5" height="3.6" fill="#dfe8f6"/><path d="M8.4 17.6V29.6" stroke="#4f78c8" stroke-width=".9"/><path d="M0.5 23.6H16.3" stroke="#4f78c8" stroke-width=".9"/><rect x="17.3" y="8.6" width="12.6" height="6.2" fill="#fff" stroke="#4f78c8" stroke-width="1"/><rect x="18.5" y="9.799999999999999" width="3.9" height="3.8000000000000003" fill="#e6eefa"/><rect x="24.8" y="9.799999999999999" width="3.9" height="3.8000000000000003" fill="#e6eefa"/><path d="M23.6 8.6V14.8" stroke="#4f78c8" stroke-width=".9"/><circle cx="12.800" cy="11.800" r="5.300" fill="#e2582c" stroke="#a8330f" stroke-width=".7"/><path d="M10.300 9.300L15.300 14.300M15.300 9.300L10.300 14.300" stroke="#fff" stroke-width="1.800"/></svg>
<svg style="left:1014.75px;top:118.0px" width="5.5" height="3.6" viewBox="0 0 5.5 3.6"><path d="M0 0H5.5L2.75 3.6Z" fill="#555"/></svg>
<svg style="left:1029.8px;top:103.9px" width="31" height="31" viewBox="0 0 31 31"><path d="M.5 3.800V1.200M30 3.800V1.200" stroke="#2a4a88" stroke-width=".9"/><path d="M1.500 2.500H7M24 2.500H29" stroke="#2a4a88" stroke-width=".9" stroke-dasharray="1 1"/><path d="M9 2.500H22" stroke="#2a4a88" stroke-width="1.100"/><path d="M8 2.500L11 .7V4.300ZM23 2.500L20 .7V4.300Z" fill="#2a4a88"/><rect x=".5" y="5.500" width="29.500" height="20.500" fill="#eef2fc" stroke="#7f9ad6"/><path d="M.5 9.300H30M.5 22.300H30M8.500 5.500V26M18.500 5.500V26M26 5.500V26" stroke="#a9bce6" stroke-width=".8"/><rect x="9" y="9.800" width="9" height="12" fill="#9fb6ea"/><rect x="10.500" y="11.300" width="6" height="9" fill="#8aa5e4"/><path d="M2 26V28.500Q2 29.500 3 29.500H7.500Q8.500 29.500 8.500 28.500V26M9.500 26V28.500Q9.500 29.500 10.500 29.500H16.500Q17.500 29.500 17.500 28.500V26" fill="#f8f8fb" stroke="#9aa9c8" stroke-width=".7"/></svg>
<svg style="left:1063.05px;top:118.0px" width="5.5" height="3.6" viewBox="0 0 5.5 3.6"><path d="M0 0H5.5L2.75 3.6Z" fill="#555"/></svg>
<span class="t" style="left:933.30px;top:137px;font-size:10.4px;font-family:'DejaVu Sans',sans-serif;transform:scaleX(0.9206);-webkit-text-stroke:0.08px currentColor;">Insérer</span>
<span class="t" style="left:974.80px;top:137px;font-size:10.4px;font-family:'DejaVu Sans',sans-serif;transform:scaleX(0.9240);-webkit-text-stroke:0.08px currentColor;">Supprimer</span>
<span class="t" style="left:1032.90px;top:137px;font-size:10.4px;font-family:'DejaVu Sans',sans-serif;transform:scaleX(0.9283);-webkit-text-stroke:0.08px currentColor;">Format</span>
<svg style="left:1088.3px;top:106.9px" width="30" height="25" viewBox="0 0 30 25"><path d="M.6 .6H21.500L28.800 7.900V24.200H.6Z" fill="#fdfdfd" stroke="#8a8a8a" stroke-width=".9"/><path d="M21.500 .6V7.900H28.800" fill="#e6e6e6" stroke="#8a8a8a" stroke-width=".7"/><text x="2.600" y="13.300" font-size="14" font-family="Liberation Serif,serif" fill="#2f6fc8">Aa</text><path d="M21 12.500H27" stroke="#c4c4c4" stroke-width="1.200"/><path d="M2.800 16H27" stroke="#c8c8c8" stroke-width="1"/><rect x="3" y="18.500" width="3.800" height="3.600" fill="#3f8ad8"/><rect x="8" y="18.500" width="3.800" height="3.600" fill="#e0554a"/><rect x="13" y="18.500" width="3.800" height="3.600" fill="#5ab84a"/><rect x="18" y="18.500" width="3.800" height="3.600" fill="#a85ac8"/><rect x="23" y="18.500" width="3.800" height="3.600" fill="#f0883a"/></svg>
<svg style="left:1120.5px;top:117.5px" width="6" height="4" viewBox="0 0 6 4"><path d="M0 0H6L3.0 4Z" fill="#444"/></svg>
<span class="t" style="left:1089.40px;top:137px;font-size:10.4px;font-family:'DejaVu Sans',sans-serif;transform:scaleX(0.8966);-webkit-text-stroke:0.08px currentColor;">Thèmes</span>
<svg style="left:1140px;top:103.5px" width="19" height="19" viewBox="0 0 19 19"><rect x="0.5" y="0.5" width="7.600" height="7.600" fill="#6fa0d8" stroke="#3a6aa8" stroke-width=".7"/><rect x="10.5" y="0.5" width="7.600" height="7.600" fill="#e0605a" stroke="#a8332d" stroke-width=".7"/><rect x="0.5" y="10.5" width="7.600" height="7.600" fill="#a0d070" stroke="#5a9a30" stroke-width=".7"/><rect x="10.5" y="10.5" width="7.600" height="7.600" fill="#b07ad0" stroke="#7a4aa0" stroke-width=".7"/></svg>
<svg style="left:1160.75px;top:110.25px" width="5.5" height="3.5" viewBox="0 0 5.5 3.5"><path d="M0 0H5.5L2.75 3.5Z" fill="#444"/></svg>
<span class="t" style="left:1139.30px;top:132px;font-size:20px;font-family:'Liberation Serif',serif;color:#2a66b8;transform:scaleX(0.8359);-webkit-text-stroke:0;">Aa</span>
<svg style="left:1160.75px;top:138.75px" width="5.5" height="3.5" viewBox="0 0 5.5 3.5"><path d="M0 0H5.5L2.75 3.5Z" fill="#444"/></svg>
<div style="left:12px;top:158px;width:1229px;height:18px;background:#fff;"></div>
<div style="left:12px;top:176px;width:1229px;height:2px;background:#c8c8c8;"></div>
<div style="left:128px;top:158px;width:117px;height:18px;background:linear-gradient(#f4f4f4,#d4d4d4);border-left:1px solid #b5b5b5;border-right:1px solid #b5b5b5;"></div>
<span class="t" style="left:60.00px;top:160px;font-size:10.8px;font-family:'DejaVu Sans',sans-serif;transform:scaleX(0.9724);-webkit-text-stroke:0.08px currentColor;">G18</span>
<svg style="left:133px;top:162px" width="6" height="10" viewBox="0 0 6 10"><path d="M3 0L5.6 3.6H.4ZM3 10L5.6 6.4H.4Z" fill="#222"/></svg>
<div style="left:145px;top:158px;width:1px;height:18px;background:#c0c0c0;"></div>
<svg style="left:156.0px;top:160.5px" width="13" height="13" viewBox="0 0 13 13"><g transform="translate(6.500 6.500)"><circle r="6.200" fill="#a2a2a2"/><path d="M-2.600 -2.600L2.600 2.600M2.600 -2.600L-2.600 2.600" stroke="#fff" stroke-width="1.900"/></g></svg>
<svg style="left:178.5px;top:160.5px" width="13" height="13" viewBox="0 0 13 13"><g transform="translate(6.500 6.500)"><circle r="6.200" fill="#a2a2a2"/><path d="M-3 .2L-1 2.400L3 -2.400" stroke="#fff" stroke-width="1.900" fill="none"/></g></svg>
<div style="left:202px;top:160px;width:24px;height:14px;border-radius:7px 0 0 7px;border:1px solid #9a9a9a;border-right:none;background:linear-gradient(#dcdcdc,#f8f8f8);"></div>
<div style="left:207.5px;top:164px;width:7px;height:7px;border-radius:50%;background:radial-gradient(#d8d8d8,#9c9c9c);"></div>
<span class="t" style="left:227.30px;top:159px;font-size:13.5px;font-family:'Liberation Serif',serif;font-style:italic;color:#222;transform:scaleX(1.3128);-webkit-text-stroke:0;">fx</span>
<span class="t" style="left:254.30px;top:160px;font-size:11px;font-family:'DejaVu Sans',sans-serif;transform:scaleX(1.0299);-webkit-text-stroke:0.08px currentColor;">CONFIRMED</span>
<div style="left:1226px;top:158px;width:1px;height:18px;background:#c4c4c4;"></div>
<svg style="left:1230.0px;top:166.0px" width="7" height="4" viewBox="0 0 7 4"><path d="M0 0H7L3.5 4Z" fill="#333"/></svg>
<div style="left:41px;top:192px;width:1185px;height:544px;background:#fff;"></div>
<div style="left:41px;top:207px;width:1185px;height:1px;background:#d0d0d0;"></div>
<div style="left:41px;top:222px;width:1185px;height:1px;background:#d0d0d0;"></div>
<div style="left:41px;top:237px;width:1185px;height:1px;background:#d0d0d0;"></div>
<div style="left:41px;top:252px;width:1185px;height:1px;background:#d0d0d0;"></div>
<div style="left:41px;top:267px;width:1185px;height:1px;background:#d0d0d0;"></div>
<div style="left:41px;top:282px;width:1185px;height:1px;background:#d0d0d0;"></div>
<div style="left:41px;top:297px;width:1185px;height:1px;background:#d0d0d0;"></div>
<div style="left:41px;top:312px;width:1185px;height:1px;background:#d0d0d0;"></div>
<div style="left:41px;top:327px;width:1185px;height:1px;background:#d0d0d0;"></div>
<div style="left:41px;top:342px;width:1185px;height:1px;background:#d0d0d0;"></div>
<div style="left:41px;top:509px;width:1185px;height:1px;background:#d0d0d0;"></div>
<div style="left:41px;top:539px;width:1185px;height:1px;background:#d0d0d0;"></div>
<div style="left:41px;top:642px;width:1185px;height:1px;background:#d0d0d0;"></div>
<div style="left:41px;top:657px;width:1185px;height:1px;background:#d0d0d0;"></div>
<div style="left:41px;top:672px;width:1185px;height:1px;background:#d0d0d0;"></div>
<div style="left:41px;top:687px;width:1185px;height:1px;background:#d0d0d0;"></div>
<div style="left:41px;top:717px;width:1185px;height:1px;background:#d0d0d0;"></div>
<div style="left:63px;top:192px;width:1px;height:544px;background:#d0d0d0;"></div>
<div style="left:102px;top:192px;width:1px;height:544px;background:#d0d0d0;"></div>
<div style="left:191px;top:192px;width:1px;height:544px;background:#d0d0d0;"></div>
<div style="left:280px;top:192px;width:1px;height:544px;background:#d0d0d0;"></div>
<div style="left:576px;top:192px;width:1px;height:544px;background:#d0d0d0;"></div>
<div style="left:844px;top:192px;width:1px;height:544px;background:#d0d0d0;"></div>
<div style="left:933px;top:192px;width:1px;height:544px;background:#d0d0d0;"></div>
<div style="left:64px;top:253px;width:38px;height:29px;background:#fff;"></div>
<div style="left:103px;top:253px;width:88px;height:29px;background:#fff;"></div>
<div style="left:934px;top:253px;width:292px;height:29px;background:#fff;"></div>
<div style="left:64px;top:283px;width:38px;height:29px;background:#fff;"></div>
<div style="left:103px;top:283px;width:88px;height:29px;background:#fff;"></div>
<div style="left:934px;top:283px;width:292px;height:29px;background:#fff;"></div>
<div style="left:64px;top:313px;width:38px;height:29px;background:#fff;"></div>
<div style="left:103px;top:313px;width:88px;height:29px;background:#fff;"></div>
<div style="left:934px;top:313px;width:292px;height:29px;background:#fff;"></div>
<div style="left:64px;top:343px;width:38px;height:196px;background:#fff;"></div>
<div style="left:934px;top:343px;width:292px;height:196px;background:#fff;"></div>
<div style="left:281px;top:208px;width:945px;height:29px;background:#ffff55;"></div>
<div style="left:64px;top:238px;width:1162px;height:14px;background:#c5d9f1;"></div>
<div style="left:281px;top:253px;width:295px;height:286px;background:#dce6f1;"></div>
<div style="left:281px;top:643px;width:295px;height:104px;background:#dce6f1;"></div>
<div style="left:845px;top:253px;width:88px;height:286px;background:#c9fdd0;"></div>
<div style="left:845px;top:643px;width:88px;height:14px;background:#c9fdd0;"></div>
<div style="left:845px;top:718px;width:88px;height:29px;background:#c9fdd0;"></div>
<div style="left:41px;top:540px;width:1185px;height:102px;background:#808080;"></div>
<div style="left:63px;top:282px;width:1163px;height:1px;background:#000;"></div>
<div style="left:63px;top:312px;width:1163px;height:1px;background:#000;"></div>
<div style="left:63px;top:342px;width:1163px;height:1px;background:#000;"></div>
<div style="left:63px;top:539px;width:1163px;height:1px;background:#000;"></div>
<div style="left:63px;top:642px;width:1163px;height:1px;background:#000;"></div>
<div style="left:63px;top:672px;width:1163px;height:1px;background:#000;"></div>
<div style="left:63px;top:687px;width:1163px;height:1px;background:#000;"></div>
<div style="left:63px;top:717px;width:1163px;height:1px;background:#000;"></div>
<div style="left:102px;top:509px;width:832px;height:1px;background:#000;"></div>
<div style="left:63px;top:237px;width:1px;height:499px;background:#000;"></div>
<div style="left:102px;top:237px;width:1px;height:499px;background:#000;"></div>
<div style="left:191px;top:237px;width:1px;height:499px;background:#000;"></div>
<div style="left:280px;top:237px;width:1px;height:499px;background:#000;"></div>
<div style="left:576px;top:237px;width:1px;height:499px;background:#000;"></div>
<div style="left:844px;top:237px;width:1px;height:499px;background:#000;"></div>
<div style="left:933px;top:237px;width:1px;height:499px;background:#000;"></div>
<div style="left:62px;top:236px;width:1164px;height:2px;background:#000;"></div>
<div style="left:62px;top:252px;width:1164px;height:1px;background:#000;"></div>
<div style="left:62px;top:236px;width:2px;height:17px;background:#000;"></div>
<div style="left:279px;top:206px;width:947px;height:2px;background:#000;"></div>
<div style="left:279px;top:206px;width:2px;height:32px;background:#000;"></div>
<span class="t" style="left:128.40px;top:237px;font-size:11.82px;font-weight:bold;transform:scaleX(0.7658);">SCENES</span>
<span class="t" style="left:220.52px;top:237px;font-size:11.82px;font-weight:bold;transform:scaleX(0.7906);">DATES</span>
<span class="t" style="left:403.09px;top:237px;font-size:11.82px;font-weight:bold;transform:scaleX(0.8358);">LOCATION</span>
<span class="t" style="left:691.16px;top:237px;font-size:11.82px;font-weight:bold;transform:scaleX(0.7855);">ADRESS</span>
<span class="t" style="left:870.83px;top:237px;font-size:11.82px;font-weight:bold;transform:scaleX(0.7988);">STATUS</span>
<span class="t" style="left:1088.66px;top:237px;font-size:11.82px;font-weight:bold;transform:scaleX(0.8805);">COMMENTS</span>
<span class="t" style="left:701.47px;top:215px;font-size:18.6px;font-weight:bold;transform:scaleX(0.8969);">LOCATION OVERVIEW</span>
<span class="t" style="left:79.95px;top:259px;font-size:11.82px;font-weight:bold;transform:scaleX(0.9264);">1</span>
<span class="t" style="left:143.95px;top:259px;font-size:10.8px;transform:scaleX(1.0130);">1</span>
<span class="t" style="left:410.81px;top:252px;font-size:10.8px;transform:scaleX(0.8305);">STREET</span>
<span class="t" style="left:297.35px;top:266px;font-size:10.18px;font-style:italic;transform:scaleX(0.9956);">Emma walking in the empty streets with blood on her arms</span>
<span class="t" style="left:660.74px;top:252px;font-size:10.8px;">Rue Auguste Barbier</span>
<span class="t" style="left:682.80px;top:267px;font-size:10.18px;transform:scaleX(0.9213);">75011 PARIS</span>
<span class="t" style="left:858.73px;top:252px;font-size:10.8px;transform:scaleX(0.9259);">CONFIRMED</span>
<span class="t" style="left:999.00px;top:259px;font-size:10.8px;transform:scaleX(0.9453);">VERY REDUCE CREW (8 people max - 1 MINIVAN</span>
<span class="t" style="left:79.95px;top:289px;font-size:11.82px;font-weight:bold;transform:scaleX(0.9264);">2</span>
<span class="t" style="left:143.95px;top:289px;font-size:10.8px;transform:scaleX(1.0130);">1</span>
<span class="t" style="left:410.81px;top:282px;font-size:10.8px;transform:scaleX(0.8305);">STREET</span>
<span class="t" style="left:297.35px;top:296px;font-size:10.18px;font-style:italic;transform:scaleX(0.9956);">Emma walking in the empty streets with blood on her arms</span>
<span class="t" style="left:665.60px;top:282px;font-size:10.8px;transform:scaleX(1.0109);">Canal Saint Martin</span>
<span class="t" style="left:682.80px;top:297px;font-size:10.18px;transform:scaleX(0.9099);">75010 PARIS</span>
<span class="t" style="left:858.73px;top:282px;font-size:10.8px;transform:scaleX(0.9259);">CONFIRMED</span>
<span class="t" style="left:999.00px;top:289px;font-size:10.8px;transform:scaleX(0.9453);">VERY REDUCE CREW (8 people max - 1 MINIVAN</span>
<span class="t" style="left:79.95px;top:319px;font-size:11.82px;font-weight:bold;transform:scaleX(0.9264);">3</span>
<span class="t" style="left:143.95px;top:319px;font-size:10.8px;transform:scaleX(1.0130);">1</span>
<span class="t" style="left:410.81px;top:312px;font-size:10.8px;transform:scaleX(0.8305);">STREET</span>
<span class="t" style="left:297.35px;top:326px;font-size:10.18px;font-style:italic;transform:scaleX(0.9956);">Emma walking in the empty streets with blood on her arms</span>
<span class="t" style="left:664.10px;top:312px;font-size:10.8px;transform:scaleX(0.9869);">Rue des Vinaigriers</span>
<span class="t" style="left:682.80px;top:327px;font-size:10.18px;transform:scaleX(0.9213);">75011 PARIS</span>
<span class="t" style="left:858.73px;top:312px;font-size:10.8px;transform:scaleX(0.9259);">CONFIRMED</span>
<span class="t" style="left:999.00px;top:319px;font-size:10.8px;transform:scaleX(0.9453);">VERY REDUCE CREW (8 people max - 1 MINIVAN</span>
<span class="t" style="left:79.95px;top:433px;font-size:11.82px;font-weight:bold;transform:scaleX(0.9264);">4</span>
<span class="t" style="left:143.95px;top:418px;font-size:10.8px;transform:scaleX(1.0130);">8</span>
<span class="t" style="left:201.05px;top:418px;font-size:11.82px;font-weight:bold;transform:scaleX(0.8278);">OCTOBER 9TH</span>
<span class="t" style="left:410.34px;top:418px;font-size:10.8px;transform:scaleX(0.9311);">METRO</span>
<span class="t" style="left:675.75px;top:410px;font-size:10.8px;transform:scaleX(0.9267);">METRO LINE 6</span>
<span class="t" style="left:612.55px;top:425px;font-size:10.8px;transform:scaleX(0.9716);">Entrance by Metro KLEBER (75008 Paris)</span>
<span class="t" style="left:858.73px;top:418px;font-size:10.8px;transform:scaleX(0.9259);">CONFIRMED</span>
<span class="t" style="left:137.88px;top:516px;font-size:10.8px;transform:scaleX(1.0130);">124</span>
<span class="t" style="left:201.05px;top:516px;font-size:11.82px;font-weight:bold;transform:scaleX(0.8278);">OCTOBER 9TH</span>
<span class="t" style="left:389.88px;top:509px;font-size:10.8px;transform:scaleX(0.9176);">METROSTATION</span>
<span class="t" style="left:679.40px;top:516px;font-size:10.8px;transform:scaleX(0.8734);">LINE 6 PASSY</span>
<span class="t" style="left:858.73px;top:516px;font-size:10.8px;transform:scaleX(0.9259);">CONFIRMED</span>
<span class="t" style="left:962.50px;top:343px;font-size:11.82px;font-weight:bold;transform:scaleX(0.8923);">4  hours of shooting between 10 AM &amp; 2 PM - 10 persons max</span>
<span class="t" style="left:982.00px;top:358px;font-size:11.82px;font-weight:bold;transform:scaleX(0.8345);">WE NEED TO GIVE THE FINAL LIST ON SEPTEMBER 30TH</span>
<span class="t" style="left:1049.74px;top:373px;font-size:10.8px;transform:scaleX(1.0398);">1) Director: Mad Matthiesen</span>
<span class="t" style="left:1072.09px;top:388px;font-size:10.8px;transform:scaleX(0.9712);">2) DP: Petrus Svojik</span>
<span class="t" style="left:1068.88px;top:403px;font-size:10.8px;transform:scaleX(1.0248);">3) Actor: Maria Palm</span>
<span class="t" style="left:1057.73px;top:418px;font-size:10.8px;transform:scaleX(1.0174);">4) 1st AD: Anthony Wong</span>
<span class="t" style="left:1042.44px;top:433px;font-size:10.8px;transform:scaleX(0.9929);">5) Focus Puller: Gyorgy Horvath</span>
<span class="t" style="left:939.00px;top:448px;font-size:10.8px;transform:scaleX(0.9800);">6) Sound Operator: Mikkel Groos (HE IS NOT 100% CONFIRMED yet but most</span>
<span class="t" style="left:1072.12px;top:463px;font-size:10.8px;transform:scaleX(1.0488);">likely it will be him)</span>
<span class="t" style="left:1013.21px;top:478px;font-size:10.8px;transform:scaleX(1.0101);">7) Location Manager: Benoit Baverel (extra)</span>
<span class="t" style="left:998.00px;top:493px;font-size:10.8px;transform:scaleX(1.0211);">8) Anais Goudal (extra &amp; help with release form)</span>
<span class="t" style="left:1026.77px;top:508px;font-size:10.8px;transform:scaleX(1.0113);">9) Make-up/Hair/WD- Kirsten Zaschke</span>
<span class="t" style="left:958.00px;top:523px;font-size:10.8px;">10) EXTRA - Regular extra (Man 40 who will sit across from</span>
<span class="t" style="left:79.95px;top:583px;font-size:11.82px;font-weight:bold;transform:scaleX(0.9264);">5</span>
<span class="t" style="left:121.36px;top:583px;font-size:10.8px;transform:scaleX(1.0046);">2, 144,145</span>
<span class="t" style="left:206.55px;top:545px;font-size:11.82px;font-weight:bold;transform:scaleX(0.8714);">shooting on</span>
<span class="t" style="left:207.78px;top:560px;font-size:11.82px;font-weight:bold;transform:scaleX(0.8862);">wednesday</span>
<span class="t" style="left:196.16px;top:575px;font-size:11.82px;font-weight:bold;transform:scaleX(0.8929);">afternoon only :</span>
<span class="t" style="left:215.58px;top:590px;font-size:11.82px;font-weight:bold;transform:scaleX(0.8523);">possible</span>
<span class="t" style="left:195.05px;top:605px;font-size:11.82px;font-weight:bold;transform:scaleX(0.8974);">wednesday 15th</span>
<span class="t" style="left:225.23px;top:620px;font-size:11.82px;font-weight:bold;transform:scaleX(0.8862);">only</span>
<span class="t" style="left:390.87px;top:583px;font-size:10.8px;transform:scaleX(0.8876);">POLICESTATION</span>
<span class="t" style="left:692.63px;top:575px;font-size:10.8px;transform:scaleX(0.9757);">College</span>
<span class="t" style="left:619.05px;top:590px;font-size:10.8px;transform:scaleX(0.9810);">21 rue Sambre et Meuse 75010 PARIS</span>
<span class="t" style="left:860.66px;top:583px;font-size:10.8px;transform:scaleX(0.8746);">CANCELLED</span>
<span class="t" style="left:79.95px;top:642px;font-size:11.82px;font-weight:bold;transform:scaleX(0.9264);">6</span>
<span class="t" style="left:123.05px;top:642px;font-size:10.8px;">9, 26, 100</span>
<span class="t" style="left:369.72px;top:642px;font-size:10.8px;transform:scaleX(0.8946);">STREET MODEL AGENCY</span>
<span class="t" style="left:668.21px;top:642px;font-size:10.8px;transform:scaleX(0.9294);">EXT WM AGENCY</span>
<span class="t" style="left:858.73px;top:642px;font-size:10.8px;transform:scaleX(0.9259);">CONFIRMED</span>
<span class="t" style="left:635.06px;top:657px;font-size:10.18px;transform:scaleX(0.9597);">Rue des Arquebusiers 75003 Paris</span>
<span class="t" style="left:79.95px;top:672px;font-size:11.82px;font-weight:bold;transform:scaleX(0.9264);">7</span>
<span class="t" style="left:140.91px;top:672px;font-size:10.8px;transform:scaleX(1.0130);">15</span>
<span class="t" style="left:378.80px;top:672px;font-size:10.8px;transform:scaleX(0.8987);">OVERVIEW OF PARIS</span>
<span class="t" style="left:677.17px;top:672px;font-size:10.8px;transform:scaleX(0.8912);">TO BE DEFINE</span>
<span class="t" style="left:879.12px;top:672px;font-size:10.8px;transform:scaleX(0.9147);">TBD</span>
<span class="t" style="left:937.00px;top:672px;font-size:10.8px;transform:scaleX(0.9265);">2/3 PEOPLE MAX DURING THE WEEK END</span>
<span class="t" style="left:79.95px;top:694px;font-size:11.82px;font-weight:bold;transform:scaleX(0.9264);">8</span>
<span class="t" style="left:140.91px;top:694px;font-size:10.8px;transform:scaleX(1.0130);">16</span>
<span class="t" style="left:410.81px;top:687px;font-size:10.8px;transform:scaleX(0.8305);">STREET</span>
<span class="t" style="left:326.20px;top:702px;font-size:10.8px;font-style:italic;transform:scaleX(1.0087);">Emma is walking down the streets of Paris</span>
<span class="t" style="left:589.29px;top:687px;font-size:10.8px;transform:scaleX(0.9876);">rue du Fbg Poissonniere, 75009 Paris OR Madame</span>
<span class="t" style="left:671.58px;top:702px;font-size:10.8px;transform:scaleX(1.0052);">Leseur coutyard</span>
<span class="t" style="left:879.12px;top:694px;font-size:10.8px;transform:scaleX(0.9147);">TBD</span>
<span class="t" style="left:937.00px;top:694px;font-size:10.8px;transform:scaleX(1.0181);">Mads will make the decision very soon</span>
<span class="t" style="left:79.95px;top:724px;font-size:11.82px;font-weight:bold;transform:scaleX(0.9264);">9</span>
<span class="t" style="left:112.61px;top:717px;font-size:10.8px;">17, 18, 19, 20,</span>
<span class="t" style="left:197.16px;top:717px;font-size:11.82px;font-weight:bold;transform:scaleX(0.8767);">Not possible on</span>
<span class="t" style="left:397.73px;top:724px;font-size:10.8px;transform:scaleX(0.9242);">SHOOTING 1</span>
<span class="t" style="left:640.26px;top:717px;font-size:10.8px;transform:scaleX(1.0266);">Appartment Madame Leseur</span>
<span class="t" style="left:858.73px;top:724px;font-size:10.8px;transform:scaleX(0.9259);">CONFIRMED</span>
<div style="left:844px;top:717px;width:90px;height:40px;border:2px solid #3b74d8;"></div>
<div style="left:12px;top:178px;width:1214px;height:14px;background:linear-gradient(#f6f6f6,#e4e4e4 45%,#d4d4d4);border-top:1px solid #b0b0b0;border-bottom:1px solid #9c9c9c;"></div>
<div style="left:845px;top:179px;width:88px;height:12px;background:linear-gradient(#8c8c8c,#b9b9b9);"></div>
<div style="left:40px;top:179px;width:1px;height:13px;background:#a8a8a8;"></div>
<div style="left:63px;top:179px;width:1px;height:13px;background:#a8a8a8;"></div>
<div style="left:102px;top:179px;width:1px;height:13px;background:#a8a8a8;"></div>
<div style="left:191px;top:179px;width:1px;height:13px;background:#a8a8a8;"></div>
<div style="left:280px;top:179px;width:1px;height:13px;background:#a8a8a8;"></div>
<div style="left:576px;top:179px;width:1px;height:13px;background:#a8a8a8;"></div>
<div style="left:844px;top:179px;width:1px;height:13px;background:#a8a8a8;"></div>
<div style="left:933px;top:179px;width:1px;height:13px;background:#a8a8a8;"></div>
<span class="t" style="left:48.25px;top:177px;font-size:10.5px;font-family:'DejaVu Sans',sans-serif;font-weight:bold;color:#5a5a5a;transform:scaleX(0.9213);-webkit-text-stroke:0.08px currentColor;-webkit-text-stroke:0;">A</span>
<span class="t" style="left:79.25px;top:177px;font-size:10.5px;font-family:'DejaVu Sans',sans-serif;font-weight:bold;color:#5a5a5a;transform:scaleX(0.9357);-webkit-text-stroke:0.08px currentColor;-webkit-text-stroke:0;">B</span>
<span class="t" style="left:143.25px;top:177px;font-size:10.5px;font-family:'DejaVu Sans',sans-serif;font-weight:bold;color:#5a5a5a;transform:scaleX(0.9717);-webkit-text-stroke:0.08px currentColor;-webkit-text-stroke:0;">C</span>
<span class="t" style="left:232.25px;top:177px;font-size:10.5px;font-family:'DejaVu Sans',sans-serif;font-weight:bold;color:#5a5a5a;transform:scaleX(0.8602);-webkit-text-stroke:0.08px currentColor;-webkit-text-stroke:0;">D</span>
<span class="t" style="left:424.75px;top:177px;font-size:10.5px;font-family:'DejaVu Sans',sans-serif;font-weight:bold;color:#5a5a5a;transform:scaleX(1.0435);-webkit-text-stroke:0.08px currentColor;-webkit-text-stroke:0;">E</span>
<span class="t" style="left:706.75px;top:177px;font-size:10.5px;font-family:'DejaVu Sans',sans-serif;font-weight:bold;color:#5a5a5a;transform:scaleX(1.0435);-webkit-text-stroke:0.08px currentColor;-webkit-text-stroke:0;">F</span>
<span class="t" style="left:885.25px;top:177px;font-size:10.5px;font-family:'DejaVu Sans',sans-serif;font-weight:bold;color:#fff;transform:scaleX(0.8696);-webkit-text-stroke:0.08px currentColor;-webkit-text-stroke:0;">G</span>
<span class="t" style="left:1115.25px;top:177px;font-size:10.5px;font-family:'DejaVu Sans',sans-serif;font-weight:bold;color:#5a5a5a;transform:scaleX(0.8526);-webkit-text-stroke:0.08px currentColor;-webkit-text-stroke:0;">H</span>
<svg style="left:28px;top:180px" width="10" height="10"><path d="M9 0V9H0Z" fill="#fff" stroke="#aaa" stroke-width="0.6"/></svg>
<div style="left:12px;top:192px;width:28px;height:544px;background:#dcdcdc;"></div>
<div style="left:40px;top:192px;width:1px;height:544px;background:#9e9e9e;"></div>
<div style="left:12px;top:718px;width:28px;height:18px;background:linear-gradient(#8e8e8e,#b4b4b4);"></div>
<div style="left:12px;top:207px;width:28px;height:1px;background:#a6a6a6;"></div>
<div style="left:12px;top:208px;width:28px;height:1px;background:#ececec;"></div>
<span class="t" style="left:22.20px;top:193px;font-size:11px;font-family:'DejaVu Sans',sans-serif;color:#505050;transform:scaleX(0.9429);-webkit-text-stroke:0.08px currentColor;-webkit-text-stroke:0.15px #505050;">1</span>
<div style="left:12px;top:222px;width:28px;height:1px;background:#a6a6a6;"></div>
<div style="left:12px;top:223px;width:28px;height:1px;background:#ececec;"></div>
<span class="t" style="left:22.20px;top:208px;font-size:11px;font-family:'DejaVu Sans',sans-serif;color:#505050;transform:scaleX(0.9429);-webkit-text-stroke:0.08px currentColor;-webkit-text-stroke:0.15px #505050;">2</span>
<div style="left:12px;top:237px;width:28px;height:1px;background:#a6a6a6;"></div>
<div style="left:12px;top:238px;width:28px;height:1px;background:#ececec;"></div>
<span class="t" style="left:22.20px;top:223px;font-size:11px;font-family:'DejaVu Sans',sans-serif;color:#505050;transform:scaleX(0.9429);-webkit-text-stroke:0.08px currentColor;-webkit-text-stroke:0.15px #505050;">3</span>
<div style="left:12px;top:252px;width:28px;height:1px;background:#a6a6a6;"></div>
<div style="left:12px;top:253px;width:28px;height:1px;background:#ececec;"></div>
<span class="t" style="left:22.20px;top:238px;font-size:11px;font-family:'DejaVu Sans',sans-serif;color:#505050;transform:scaleX(0.9429);-webkit-text-stroke:0.08px currentColor;-webkit-text-stroke:0.15px #505050;">4</span>
<div style="left:12px;top:267px;width:28px;height:1px;background:#a6a6a6;"></div>
<div style="left:12px;top:268px;width:28px;height:1px;background:#ececec;"></div>
<span class="t" style="left:22.20px;top:253px;font-size:11px;font-family:'DejaVu Sans',sans-serif;color:#505050;transform:scaleX(0.9429);-webkit-text-stroke:0.08px currentColor;-webkit-text-stroke:0.15px #505050;">5</span>
<div style="left:12px;top:282px;width:28px;height:1px;background:#a6a6a6;"></div>
<div style="left:12px;top:283px;width:28px;height:1px;background:#ececec;"></div>
<span class="t" style="left:22.20px;top:268px;font-size:11px;font-family:'DejaVu Sans',sans-serif;color:#505050;transform:scaleX(0.9429);-webkit-text-stroke:0.08px currentColor;-webkit-text-stroke:0.15px #505050;">6</span>
<div style="left:12px;top:297px;width:28px;height:1px;background:#a6a6a6;"></div>
<div style="left:12px;top:298px;width:28px;height:1px;background:#ececec;"></div>
<span class="t" style="left:22.20px;top:283px;font-size:11px;font-family:'DejaVu Sans',sans-serif;color:#505050;transform:scaleX(0.9429);-webkit-text-stroke:0.08px currentColor;-webkit-text-stroke:0.15px #505050;">7</span>
<div style="left:12px;top:312px;width:28px;height:1px;background:#a6a6a6;"></div>
<div style="left:12px;top:313px;width:28px;height:1px;background:#ececec;"></div>
<span class="t" style="left:22.20px;top:298px;font-size:11px;font-family:'DejaVu Sans',sans-serif;color:#505050;transform:scaleX(0.9429);-webkit-text-stroke:0.08px currentColor;-webkit-text-stroke:0.15px #505050;">8</span>
<div style="left:12px;top:327px;width:28px;height:1px;background:#a6a6a6;"></div>
<div style="left:12px;top:328px;width:28px;height:1px;background:#ececec;"></div>
<span class="t" style="left:22.20px;top:313px;font-size:11px;font-family:'DejaVu Sans',sans-serif;color:#505050;transform:scaleX(0.9429);-webkit-text-stroke:0.08px currentColor;-webkit-text-stroke:0.15px #505050;">9</span>
<div style="left:12px;top:342px;width:28px;height:1px;background:#a6a6a6;"></div>
<div style="left:12px;top:343px;width:28px;height:1px;background:#ececec;"></div>
<span class="t" style="left:18.90px;top:328px;font-size:11px;font-family:'DejaVu Sans',sans-serif;color:#505050;transform:scaleX(0.9429);-webkit-text-stroke:0.08px currentColor;-webkit-text-stroke:0.15px #505050;">10</span>
<div style="left:12px;top:509px;width:28px;height:1px;background:#a6a6a6;"></div>
<div style="left:12px;top:510px;width:28px;height:1px;background:#ececec;"></div>
<span class="t" style="left:18.90px;top:495px;font-size:11px;font-family:'DejaVu Sans',sans-serif;color:#505050;transform:scaleX(0.9429);-webkit-text-stroke:0.08px currentColor;-webkit-text-stroke:0.15px #505050;">11</span>
<div style="left:12px;top:539px;width:28px;height:1px;background:#a6a6a6;"></div>
<div style="left:12px;top:540px;width:28px;height:1px;background:#ececec;"></div>
<span class="t" style="left:18.90px;top:525px;font-size:11px;font-family:'DejaVu Sans',sans-serif;color:#505050;transform:scaleX(0.9429);-webkit-text-stroke:0.08px currentColor;-webkit-text-stroke:0.15px #505050;">12</span>
<div style="left:12px;top:642px;width:28px;height:1px;background:#a6a6a6;"></div>
<div style="left:12px;top:643px;width:28px;height:1px;background:#ececec;"></div>
<span class="t" style="left:18.90px;top:628px;font-size:11px;font-family:'DejaVu Sans',sans-serif;color:#505050;transform:scaleX(0.9429);-webkit-text-stroke:0.08px currentColor;-webkit-text-stroke:0.15px #505050;">13</span>
<div style="left:12px;top:657px;width:28px;height:1px;background:#a6a6a6;"></div>
<div style="left:12px;top:658px;width:28px;height:1px;background:#ececec;"></div>
<span class="t" style="left:18.90px;top:643px;font-size:11px;font-family:'DejaVu Sans',sans-serif;color:#505050;transform:scaleX(0.9429);-webkit-text-stroke:0.08px currentColor;-webkit-text-stroke:0.15px #505050;">14</span>
<div style="left:12px;top:672px;width:28px;height:1px;background:#a6a6a6;"></div>
<div style="left:12px;top:673px;width:28px;height:1px;background:#ececec;"></div>
<span class="t" style="left:18.90px;top:658px;font-size:11px;font-family:'DejaVu Sans',sans-serif;color:#505050;transform:scaleX(0.9429);-webkit-text-stroke:0.08px currentColor;-webkit-text-stroke:0.15px #505050;">15</span>
<div style="left:12px;top:687px;width:28px;height:1px;background:#a6a6a6;"></div>
<div style="left:12px;top:688px;width:28px;height:1px;background:#ececec;"></div>
<span class="t" style="left:18.90px;top:673px;font-size:11px;font-family:'DejaVu Sans',sans-serif;color:#505050;transform:scaleX(0.9429);-webkit-text-stroke:0.08px currentColor;-webkit-text-stroke:0.15px #505050;">16</span>
<div style="left:12px;top:717px;width:28px;height:1px;background:#a6a6a6;"></div>
<div style="left:12px;top:718px;width:28px;height:1px;background:#ececec;"></div>
<span class="t" style="left:18.90px;top:703px;font-size:11px;font-family:'DejaVu Sans',sans-serif;color:#505050;transform:scaleX(0.9429);-webkit-text-stroke:0.08px currentColor;-webkit-text-stroke:0.15px #505050;">17</span>
<span class="t" style="left:18.90px;top:733px;font-size:11px;font-family:'DejaVu Sans',sans-serif;color:#fff;transform:scaleX(0.9429);-webkit-text-stroke:0.08px currentColor;">18</span>
<div style="left:1226px;top:178px;width:15px;height:558px;background:#fbfbfb;border-left:1px solid #d9d9d9;"></div>
<div style="left:1226px;top:178px;width:15px;height:14px;background:linear-gradient(#fafafa,#dedede);border:1px solid #b4b4b4;border-right:none;"></div>
<div style="left:1230px;top:183px;width:8px;height:1px;background:#777;"></div>
<div style="left:1230px;top:186px;width:8px;height:1px;background:#777;"></div>
<div style="left:1229.5px;top:192.5px;width:8.5px;height:156px;background:#c1c1c1;border-radius:4.250px;"></div>
<div style="left:12px;top:736px;width:1229px;height:17px;background:linear-gradient(#a3b2c5,#92a3b9);border-top:1px solid #8a8a8a;"></div>
<div style="left:12px;top:736px;width:66px;height:31px;background:#e3e3e3;border-top:1px solid #a0a0a0;"></div>
<div style="left:78px;top:737px;width:66px;height:15px;background:linear-gradient(#f6f6f6,#dcdcdc);border-right:1px solid #a8a8a8;border-left:1px solid #b5b5b5;"></div>
<svg style="left:78px;top:738px" width="66" height="14" viewBox="0 0 66 14"><g fill="#adadad"><rect x="7.500" y="3.500" width="1.200" height="7"/><path d="M14.500 3.500V10.500L9.200 7Z"/><path d="M28 3.500V10.500L22 7Z"/><path d="M38 3.500V10.500L44 7Z"/><path d="M51.500 3.500V10.500L56.800 7Z"/><rect x="57.200" y="3.500" width="1.200" height="7"/></g></svg>
<svg style="left:156px;top:736px" width="54" height="17" viewBox="0 0 54 17"><path d="M.9 0V12.800Q.9 15.800 4 15.800H45L51.800 8.500V0Z" fill="#fff" stroke="#8e98a6" stroke-width=".8"/><rect x="1.300" y="0" width="50.100" height="1.500" fill="#fff"/></svg>
<span class="t" style="left:170.20px;top:735px;font-size:10.6px;font-family:'DejaVu Sans',sans-serif;font-weight:bold;color:#111;transform:scaleX(0.8512);-webkit-text-stroke:0.08px currentColor;">Ark1</span>
<svg style="left:207.5px;top:736px" width="24" height="17" viewBox="0 0 24 17"><path d="M.8 0V12Q.8 15 3.800 15H16.500L22.800 8.500V0Z" fill="#e6e6e6" stroke="#8e98a6" stroke-width=".8"/><path d="M7.500 6.800H15.500M11.500 2.800V10.800" stroke="#333" stroke-width="1.800"/></svg>
<div style="left:659.5px;top:737px;width:4.5px;height:16px;background:#8d98a6;"></div>
<div style="left:664px;top:737px;width:550px;height:16px;background:#fbfbfb;"></div>
<div style="left:666.5px;top:740.5px;width:290.5px;height:8.5px;background:#c1c1c1;border-radius:4.250px;"></div>
<div style="left:1214px;top:737px;width:12px;height:16px;background:linear-gradient(#f4f4f4,#dadada);border-left:1px solid #b0b0b0;"></div>
<div style="left:1217.5px;top:740px;width:1px;height:10px;background:#777;"></div>
<div style="left:1220.5px;top:740px;width:1px;height:10px;background:#777;"></div>
<div style="left:1226px;top:736px;width:15px;height:17px;background:#ececec;"></div>
<div style="left:78px;top:753px;width:1163px;height:14px;background:linear-gradient(#f2f2f2,#dcdcdc);border-top:1px solid #b9b9b9;"></div>
<div style="left:152px;top:754px;width:1px;height:13px;background:#a9a9a9;"></div>
<div style="left:153px;top:754px;width:1px;height:13px;background:#fafafa;"></div>
<div style="left:531px;top:754px;width:1px;height:13px;background:#a9a9a9;"></div>
<div style="left:532px;top:754px;width:1px;height:13px;background:#fafafa;"></div>
<div style="left:689px;top:754px;width:1px;height:13px;background:#a9a9a9;"></div>
<div style="left:690px;top:754px;width:1px;height:13px;background:#fafafa;"></div>
<div style="left:829px;top:754px;width:1px;height:13px;background:#a9a9a9;"></div>
<div style="left:830px;top:754px;width:1px;height:13px;background:#fafafa;"></div>
<div style="left:860px;top:754px;width:1px;height:13px;background:#a9a9a9;"></div>
<div style="left:861px;top:754px;width:1px;height:13px;background:#fafafa;"></div>
<div style="left:889px;top:754px;width:1px;height:13px;background:#a9a9a9;"></div>
<div style="left:890px;top:754px;width:1px;height:13px;background:#fafafa;"></div>
<div style="left:917.5px;top:754px;width:1px;height:13px;background:#a9a9a9;"></div>
<div style="left:918.5px;top:754px;width:1px;height:13px;background:#fafafa;"></div>
<span class="t" style="left:81.90px;top:754px;font-size:10.4px;font-family:'DejaVu Sans',sans-serif;color:#111;transform:scaleX(0.9102);-webkit-text-stroke:0.08px currentColor;">Mode Normal</span>
<span class="t" style="left:158.40px;top:754px;font-size:10.4px;font-family:'DejaVu Sans',sans-serif;color:#111;transform:scaleX(0.8741);-webkit-text-stroke:0.08px currentColor;">Prêt</span>
<span class="t" style="left:693.30px;top:754px;font-size:10.4px;font-family:'DejaVu Sans',sans-serif;color:#111;transform:scaleX(0.9052);-webkit-text-stroke:0.08px currentColor;">Somme=0</span>
<svg style="left:813.8px;top:760.25px" width="8" height="4.5" viewBox="0 0 8 4.5"><path d="M0 0H8L4.0 4.5Z" fill="#111"/></svg>
<svg style="left:1230px;top:756px" width="11" height="11" viewBox="0 0 11 11"><path d="M1 11L11 1M4.500 11L11 4.500M8 11L11 8" stroke="#8c8c8c" stroke-width="1"/></svg>
<div style="left:15px;top:740.5px;width:59px;height:24px;border-radius:5px;background:linear-gradient(#fdfdfd,#d9d9d9);border:1px solid #7d7d7d;"></div>
<div style="left:15px;top:740.5px;width:30px;height:24px;border-radius:5px 0 0 5px;background:linear-gradient(#5c5c5c,#808080);border:1px solid #4c4c4c;"></div>
<svg style="left:22.5px;top:747px" width="15" height="11" viewBox="0 0 15 11"><rect x=".5" y=".5" width="14" height="10" fill="#dff0ff" stroke="#3d8fe0"/><path d="M.5 3H14.500M.5 5.500H14.500M.5 8H14.500M3.500 .5V10.500M6.500 .5V10.500M9.500 .5V10.500M12.500 .5V10.500" stroke="#3d8fe0" stroke-width=".8"/></svg>
<svg style="left:48.5px;top:747px" width="9" height="11" viewBox="0 0 9 11"><rect x=".5" y=".5" width="7.500" height="10" fill="#fff" stroke="#3c3c3c"/><path d="M.5 3.800H8M.5 7.200H8M4.250 .5V10.500" stroke="#3c3c3c" stroke-width=".9"/></svg>
<svg style="left:59.5px;top:747px" width="9" height="11" viewBox="0 0 9 11"><rect x=".5" y=".5" width="7.500" height="10" fill="#fff" stroke="#3c3c3c"/><path d="M.5 3.800H8M.5 7.200H8M4.250 .5V10.500" stroke="#3c3c3c" stroke-width=".9"/></svg>
<div style="left:1241px;top:0px;width:5px;height:767px;background:#000;"></div>
<div style="left:1242px;top:198px;width:4px;height:78px;background:#262626;"></div>
<div style="left:1242px;top:342px;width:4px;height:58px;background:#3d4654;"></div>
<div style="left:1242px;top:300px;width:4px;height:28px;background:#555;"></div>
<div style="left:1243px;top:545px;width:3px;height:40px;background:#3a3a3a;"></div>
<div style="left:1243px;top:640px;width:3px;height:50px;background:#3a3a3a;"></div>
</div>
</body></html>
